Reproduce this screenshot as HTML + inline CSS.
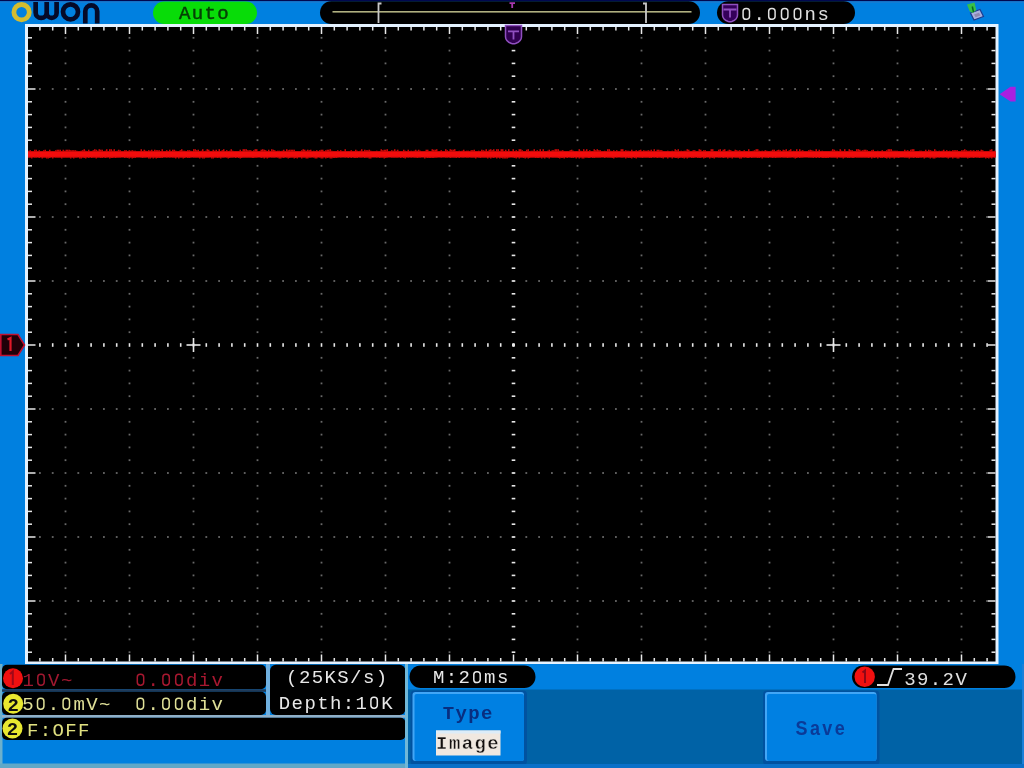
<!DOCTYPE html>
<html><head><meta charset="utf-8"><style>
html,body{margin:0;padding:0;width:1024px;height:768px;overflow:hidden;background:#0080e0}
svg{position:absolute;left:0;top:0;display:block;filter:blur(0.5px)}
text{font-family:"Liberation Mono",monospace;font-size:19px}
</style></head><body>
<svg width="1024" height="768" viewBox="0 0 1024 768">
<rect x="0" y="0" width="1024" height="768" fill="#0080e0"/>
<rect x="0" y="0" width="1024" height="1.3" fill="#000850"/>
<rect x="0" y="1.3" width="1024" height="1.5" fill="#1a7cd0"/>
<rect x="25" y="24" width="973.5" height="640" fill="#e4f2ff"/>
<rect x="28.0" y="27.0" width="967.5" height="634.5" fill="#000"/>
<g fill="#686868"><rect x="64.6" y="36.9" width="1.8" height="1.8"/><rect x="64.6" y="49.7" width="1.8" height="1.8"/><rect x="64.6" y="62.5" width="1.8" height="1.8"/><rect x="64.6" y="75.3" width="1.8" height="1.8"/><rect x="64.6" y="100.9" width="1.8" height="1.8"/><rect x="64.6" y="113.7" width="1.8" height="1.8"/><rect x="64.6" y="126.5" width="1.8" height="1.8"/><rect x="64.6" y="139.3" width="1.8" height="1.8"/><rect x="64.6" y="164.9" width="1.8" height="1.8"/><rect x="64.6" y="177.7" width="1.8" height="1.8"/><rect x="64.6" y="190.5" width="1.8" height="1.8"/><rect x="64.6" y="203.3" width="1.8" height="1.8"/><rect x="64.6" y="228.9" width="1.8" height="1.8"/><rect x="64.6" y="241.7" width="1.8" height="1.8"/><rect x="64.6" y="254.5" width="1.8" height="1.8"/><rect x="64.6" y="267.3" width="1.8" height="1.8"/><rect x="64.6" y="292.9" width="1.8" height="1.8"/><rect x="64.6" y="305.7" width="1.8" height="1.8"/><rect x="64.6" y="318.5" width="1.8" height="1.8"/><rect x="64.6" y="331.3" width="1.8" height="1.8"/><rect x="64.6" y="356.9" width="1.8" height="1.8"/><rect x="64.6" y="369.7" width="1.8" height="1.8"/><rect x="64.6" y="382.5" width="1.8" height="1.8"/><rect x="64.6" y="395.3" width="1.8" height="1.8"/><rect x="64.6" y="420.9" width="1.8" height="1.8"/><rect x="64.6" y="433.7" width="1.8" height="1.8"/><rect x="64.6" y="446.5" width="1.8" height="1.8"/><rect x="64.6" y="459.3" width="1.8" height="1.8"/><rect x="64.6" y="484.9" width="1.8" height="1.8"/><rect x="64.6" y="497.7" width="1.8" height="1.8"/><rect x="64.6" y="510.5" width="1.8" height="1.8"/><rect x="64.6" y="523.3" width="1.8" height="1.8"/><rect x="64.6" y="548.9" width="1.8" height="1.8"/><rect x="64.6" y="561.7" width="1.8" height="1.8"/><rect x="64.6" y="574.5" width="1.8" height="1.8"/><rect x="64.6" y="587.3" width="1.8" height="1.8"/><rect x="64.6" y="612.9" width="1.8" height="1.8"/><rect x="64.6" y="625.7" width="1.8" height="1.8"/><rect x="64.6" y="638.5" width="1.8" height="1.8"/><rect x="64.6" y="651.3" width="1.8" height="1.8"/><rect x="128.6" y="36.9" width="1.8" height="1.8"/><rect x="128.6" y="49.7" width="1.8" height="1.8"/><rect x="128.6" y="62.5" width="1.8" height="1.8"/><rect x="128.6" y="75.3" width="1.8" height="1.8"/><rect x="128.6" y="100.9" width="1.8" height="1.8"/><rect x="128.6" y="113.7" width="1.8" height="1.8"/><rect x="128.6" y="126.5" width="1.8" height="1.8"/><rect x="128.6" y="139.3" width="1.8" height="1.8"/><rect x="128.6" y="164.9" width="1.8" height="1.8"/><rect x="128.6" y="177.7" width="1.8" height="1.8"/><rect x="128.6" y="190.5" width="1.8" height="1.8"/><rect x="128.6" y="203.3" width="1.8" height="1.8"/><rect x="128.6" y="228.9" width="1.8" height="1.8"/><rect x="128.6" y="241.7" width="1.8" height="1.8"/><rect x="128.6" y="254.5" width="1.8" height="1.8"/><rect x="128.6" y="267.3" width="1.8" height="1.8"/><rect x="128.6" y="292.9" width="1.8" height="1.8"/><rect x="128.6" y="305.7" width="1.8" height="1.8"/><rect x="128.6" y="318.5" width="1.8" height="1.8"/><rect x="128.6" y="331.3" width="1.8" height="1.8"/><rect x="128.6" y="356.9" width="1.8" height="1.8"/><rect x="128.6" y="369.7" width="1.8" height="1.8"/><rect x="128.6" y="382.5" width="1.8" height="1.8"/><rect x="128.6" y="395.3" width="1.8" height="1.8"/><rect x="128.6" y="420.9" width="1.8" height="1.8"/><rect x="128.6" y="433.7" width="1.8" height="1.8"/><rect x="128.6" y="446.5" width="1.8" height="1.8"/><rect x="128.6" y="459.3" width="1.8" height="1.8"/><rect x="128.6" y="484.9" width="1.8" height="1.8"/><rect x="128.6" y="497.7" width="1.8" height="1.8"/><rect x="128.6" y="510.5" width="1.8" height="1.8"/><rect x="128.6" y="523.3" width="1.8" height="1.8"/><rect x="128.6" y="548.9" width="1.8" height="1.8"/><rect x="128.6" y="561.7" width="1.8" height="1.8"/><rect x="128.6" y="574.5" width="1.8" height="1.8"/><rect x="128.6" y="587.3" width="1.8" height="1.8"/><rect x="128.6" y="612.9" width="1.8" height="1.8"/><rect x="128.6" y="625.7" width="1.8" height="1.8"/><rect x="128.6" y="638.5" width="1.8" height="1.8"/><rect x="128.6" y="651.3" width="1.8" height="1.8"/><rect x="192.6" y="36.9" width="1.8" height="1.8"/><rect x="192.6" y="49.7" width="1.8" height="1.8"/><rect x="192.6" y="62.5" width="1.8" height="1.8"/><rect x="192.6" y="75.3" width="1.8" height="1.8"/><rect x="192.6" y="100.9" width="1.8" height="1.8"/><rect x="192.6" y="113.7" width="1.8" height="1.8"/><rect x="192.6" y="126.5" width="1.8" height="1.8"/><rect x="192.6" y="139.3" width="1.8" height="1.8"/><rect x="192.6" y="164.9" width="1.8" height="1.8"/><rect x="192.6" y="177.7" width="1.8" height="1.8"/><rect x="192.6" y="190.5" width="1.8" height="1.8"/><rect x="192.6" y="203.3" width="1.8" height="1.8"/><rect x="192.6" y="228.9" width="1.8" height="1.8"/><rect x="192.6" y="241.7" width="1.8" height="1.8"/><rect x="192.6" y="254.5" width="1.8" height="1.8"/><rect x="192.6" y="267.3" width="1.8" height="1.8"/><rect x="192.6" y="292.9" width="1.8" height="1.8"/><rect x="192.6" y="305.7" width="1.8" height="1.8"/><rect x="192.6" y="318.5" width="1.8" height="1.8"/><rect x="192.6" y="331.3" width="1.8" height="1.8"/><rect x="192.6" y="356.9" width="1.8" height="1.8"/><rect x="192.6" y="369.7" width="1.8" height="1.8"/><rect x="192.6" y="382.5" width="1.8" height="1.8"/><rect x="192.6" y="395.3" width="1.8" height="1.8"/><rect x="192.6" y="420.9" width="1.8" height="1.8"/><rect x="192.6" y="433.7" width="1.8" height="1.8"/><rect x="192.6" y="446.5" width="1.8" height="1.8"/><rect x="192.6" y="459.3" width="1.8" height="1.8"/><rect x="192.6" y="484.9" width="1.8" height="1.8"/><rect x="192.6" y="497.7" width="1.8" height="1.8"/><rect x="192.6" y="510.5" width="1.8" height="1.8"/><rect x="192.6" y="523.3" width="1.8" height="1.8"/><rect x="192.6" y="548.9" width="1.8" height="1.8"/><rect x="192.6" y="561.7" width="1.8" height="1.8"/><rect x="192.6" y="574.5" width="1.8" height="1.8"/><rect x="192.6" y="587.3" width="1.8" height="1.8"/><rect x="192.6" y="612.9" width="1.8" height="1.8"/><rect x="192.6" y="625.7" width="1.8" height="1.8"/><rect x="192.6" y="638.5" width="1.8" height="1.8"/><rect x="192.6" y="651.3" width="1.8" height="1.8"/><rect x="256.6" y="36.9" width="1.8" height="1.8"/><rect x="256.6" y="49.7" width="1.8" height="1.8"/><rect x="256.6" y="62.5" width="1.8" height="1.8"/><rect x="256.6" y="75.3" width="1.8" height="1.8"/><rect x="256.6" y="100.9" width="1.8" height="1.8"/><rect x="256.6" y="113.7" width="1.8" height="1.8"/><rect x="256.6" y="126.5" width="1.8" height="1.8"/><rect x="256.6" y="139.3" width="1.8" height="1.8"/><rect x="256.6" y="164.9" width="1.8" height="1.8"/><rect x="256.6" y="177.7" width="1.8" height="1.8"/><rect x="256.6" y="190.5" width="1.8" height="1.8"/><rect x="256.6" y="203.3" width="1.8" height="1.8"/><rect x="256.6" y="228.9" width="1.8" height="1.8"/><rect x="256.6" y="241.7" width="1.8" height="1.8"/><rect x="256.6" y="254.5" width="1.8" height="1.8"/><rect x="256.6" y="267.3" width="1.8" height="1.8"/><rect x="256.6" y="292.9" width="1.8" height="1.8"/><rect x="256.6" y="305.7" width="1.8" height="1.8"/><rect x="256.6" y="318.5" width="1.8" height="1.8"/><rect x="256.6" y="331.3" width="1.8" height="1.8"/><rect x="256.6" y="356.9" width="1.8" height="1.8"/><rect x="256.6" y="369.7" width="1.8" height="1.8"/><rect x="256.6" y="382.5" width="1.8" height="1.8"/><rect x="256.6" y="395.3" width="1.8" height="1.8"/><rect x="256.6" y="420.9" width="1.8" height="1.8"/><rect x="256.6" y="433.7" width="1.8" height="1.8"/><rect x="256.6" y="446.5" width="1.8" height="1.8"/><rect x="256.6" y="459.3" width="1.8" height="1.8"/><rect x="256.6" y="484.9" width="1.8" height="1.8"/><rect x="256.6" y="497.7" width="1.8" height="1.8"/><rect x="256.6" y="510.5" width="1.8" height="1.8"/><rect x="256.6" y="523.3" width="1.8" height="1.8"/><rect x="256.6" y="548.9" width="1.8" height="1.8"/><rect x="256.6" y="561.7" width="1.8" height="1.8"/><rect x="256.6" y="574.5" width="1.8" height="1.8"/><rect x="256.6" y="587.3" width="1.8" height="1.8"/><rect x="256.6" y="612.9" width="1.8" height="1.8"/><rect x="256.6" y="625.7" width="1.8" height="1.8"/><rect x="256.6" y="638.5" width="1.8" height="1.8"/><rect x="256.6" y="651.3" width="1.8" height="1.8"/><rect x="320.6" y="36.9" width="1.8" height="1.8"/><rect x="320.6" y="49.7" width="1.8" height="1.8"/><rect x="320.6" y="62.5" width="1.8" height="1.8"/><rect x="320.6" y="75.3" width="1.8" height="1.8"/><rect x="320.6" y="100.9" width="1.8" height="1.8"/><rect x="320.6" y="113.7" width="1.8" height="1.8"/><rect x="320.6" y="126.5" width="1.8" height="1.8"/><rect x="320.6" y="139.3" width="1.8" height="1.8"/><rect x="320.6" y="164.9" width="1.8" height="1.8"/><rect x="320.6" y="177.7" width="1.8" height="1.8"/><rect x="320.6" y="190.5" width="1.8" height="1.8"/><rect x="320.6" y="203.3" width="1.8" height="1.8"/><rect x="320.6" y="228.9" width="1.8" height="1.8"/><rect x="320.6" y="241.7" width="1.8" height="1.8"/><rect x="320.6" y="254.5" width="1.8" height="1.8"/><rect x="320.6" y="267.3" width="1.8" height="1.8"/><rect x="320.6" y="292.9" width="1.8" height="1.8"/><rect x="320.6" y="305.7" width="1.8" height="1.8"/><rect x="320.6" y="318.5" width="1.8" height="1.8"/><rect x="320.6" y="331.3" width="1.8" height="1.8"/><rect x="320.6" y="356.9" width="1.8" height="1.8"/><rect x="320.6" y="369.7" width="1.8" height="1.8"/><rect x="320.6" y="382.5" width="1.8" height="1.8"/><rect x="320.6" y="395.3" width="1.8" height="1.8"/><rect x="320.6" y="420.9" width="1.8" height="1.8"/><rect x="320.6" y="433.7" width="1.8" height="1.8"/><rect x="320.6" y="446.5" width="1.8" height="1.8"/><rect x="320.6" y="459.3" width="1.8" height="1.8"/><rect x="320.6" y="484.9" width="1.8" height="1.8"/><rect x="320.6" y="497.7" width="1.8" height="1.8"/><rect x="320.6" y="510.5" width="1.8" height="1.8"/><rect x="320.6" y="523.3" width="1.8" height="1.8"/><rect x="320.6" y="548.9" width="1.8" height="1.8"/><rect x="320.6" y="561.7" width="1.8" height="1.8"/><rect x="320.6" y="574.5" width="1.8" height="1.8"/><rect x="320.6" y="587.3" width="1.8" height="1.8"/><rect x="320.6" y="612.9" width="1.8" height="1.8"/><rect x="320.6" y="625.7" width="1.8" height="1.8"/><rect x="320.6" y="638.5" width="1.8" height="1.8"/><rect x="320.6" y="651.3" width="1.8" height="1.8"/><rect x="384.6" y="36.9" width="1.8" height="1.8"/><rect x="384.6" y="49.7" width="1.8" height="1.8"/><rect x="384.6" y="62.5" width="1.8" height="1.8"/><rect x="384.6" y="75.3" width="1.8" height="1.8"/><rect x="384.6" y="100.9" width="1.8" height="1.8"/><rect x="384.6" y="113.7" width="1.8" height="1.8"/><rect x="384.6" y="126.5" width="1.8" height="1.8"/><rect x="384.6" y="139.3" width="1.8" height="1.8"/><rect x="384.6" y="164.9" width="1.8" height="1.8"/><rect x="384.6" y="177.7" width="1.8" height="1.8"/><rect x="384.6" y="190.5" width="1.8" height="1.8"/><rect x="384.6" y="203.3" width="1.8" height="1.8"/><rect x="384.6" y="228.9" width="1.8" height="1.8"/><rect x="384.6" y="241.7" width="1.8" height="1.8"/><rect x="384.6" y="254.5" width="1.8" height="1.8"/><rect x="384.6" y="267.3" width="1.8" height="1.8"/><rect x="384.6" y="292.9" width="1.8" height="1.8"/><rect x="384.6" y="305.7" width="1.8" height="1.8"/><rect x="384.6" y="318.5" width="1.8" height="1.8"/><rect x="384.6" y="331.3" width="1.8" height="1.8"/><rect x="384.6" y="356.9" width="1.8" height="1.8"/><rect x="384.6" y="369.7" width="1.8" height="1.8"/><rect x="384.6" y="382.5" width="1.8" height="1.8"/><rect x="384.6" y="395.3" width="1.8" height="1.8"/><rect x="384.6" y="420.9" width="1.8" height="1.8"/><rect x="384.6" y="433.7" width="1.8" height="1.8"/><rect x="384.6" y="446.5" width="1.8" height="1.8"/><rect x="384.6" y="459.3" width="1.8" height="1.8"/><rect x="384.6" y="484.9" width="1.8" height="1.8"/><rect x="384.6" y="497.7" width="1.8" height="1.8"/><rect x="384.6" y="510.5" width="1.8" height="1.8"/><rect x="384.6" y="523.3" width="1.8" height="1.8"/><rect x="384.6" y="548.9" width="1.8" height="1.8"/><rect x="384.6" y="561.7" width="1.8" height="1.8"/><rect x="384.6" y="574.5" width="1.8" height="1.8"/><rect x="384.6" y="587.3" width="1.8" height="1.8"/><rect x="384.6" y="612.9" width="1.8" height="1.8"/><rect x="384.6" y="625.7" width="1.8" height="1.8"/><rect x="384.6" y="638.5" width="1.8" height="1.8"/><rect x="384.6" y="651.3" width="1.8" height="1.8"/><rect x="448.6" y="36.9" width="1.8" height="1.8"/><rect x="448.6" y="49.7" width="1.8" height="1.8"/><rect x="448.6" y="62.5" width="1.8" height="1.8"/><rect x="448.6" y="75.3" width="1.8" height="1.8"/><rect x="448.6" y="100.9" width="1.8" height="1.8"/><rect x="448.6" y="113.7" width="1.8" height="1.8"/><rect x="448.6" y="126.5" width="1.8" height="1.8"/><rect x="448.6" y="139.3" width="1.8" height="1.8"/><rect x="448.6" y="164.9" width="1.8" height="1.8"/><rect x="448.6" y="177.7" width="1.8" height="1.8"/><rect x="448.6" y="190.5" width="1.8" height="1.8"/><rect x="448.6" y="203.3" width="1.8" height="1.8"/><rect x="448.6" y="228.9" width="1.8" height="1.8"/><rect x="448.6" y="241.7" width="1.8" height="1.8"/><rect x="448.6" y="254.5" width="1.8" height="1.8"/><rect x="448.6" y="267.3" width="1.8" height="1.8"/><rect x="448.6" y="292.9" width="1.8" height="1.8"/><rect x="448.6" y="305.7" width="1.8" height="1.8"/><rect x="448.6" y="318.5" width="1.8" height="1.8"/><rect x="448.6" y="331.3" width="1.8" height="1.8"/><rect x="448.6" y="356.9" width="1.8" height="1.8"/><rect x="448.6" y="369.7" width="1.8" height="1.8"/><rect x="448.6" y="382.5" width="1.8" height="1.8"/><rect x="448.6" y="395.3" width="1.8" height="1.8"/><rect x="448.6" y="420.9" width="1.8" height="1.8"/><rect x="448.6" y="433.7" width="1.8" height="1.8"/><rect x="448.6" y="446.5" width="1.8" height="1.8"/><rect x="448.6" y="459.3" width="1.8" height="1.8"/><rect x="448.6" y="484.9" width="1.8" height="1.8"/><rect x="448.6" y="497.7" width="1.8" height="1.8"/><rect x="448.6" y="510.5" width="1.8" height="1.8"/><rect x="448.6" y="523.3" width="1.8" height="1.8"/><rect x="448.6" y="548.9" width="1.8" height="1.8"/><rect x="448.6" y="561.7" width="1.8" height="1.8"/><rect x="448.6" y="574.5" width="1.8" height="1.8"/><rect x="448.6" y="587.3" width="1.8" height="1.8"/><rect x="448.6" y="612.9" width="1.8" height="1.8"/><rect x="448.6" y="625.7" width="1.8" height="1.8"/><rect x="448.6" y="638.5" width="1.8" height="1.8"/><rect x="448.6" y="651.3" width="1.8" height="1.8"/><rect x="576.6" y="36.9" width="1.8" height="1.8"/><rect x="576.6" y="49.7" width="1.8" height="1.8"/><rect x="576.6" y="62.5" width="1.8" height="1.8"/><rect x="576.6" y="75.3" width="1.8" height="1.8"/><rect x="576.6" y="100.9" width="1.8" height="1.8"/><rect x="576.6" y="113.7" width="1.8" height="1.8"/><rect x="576.6" y="126.5" width="1.8" height="1.8"/><rect x="576.6" y="139.3" width="1.8" height="1.8"/><rect x="576.6" y="164.9" width="1.8" height="1.8"/><rect x="576.6" y="177.7" width="1.8" height="1.8"/><rect x="576.6" y="190.5" width="1.8" height="1.8"/><rect x="576.6" y="203.3" width="1.8" height="1.8"/><rect x="576.6" y="228.9" width="1.8" height="1.8"/><rect x="576.6" y="241.7" width="1.8" height="1.8"/><rect x="576.6" y="254.5" width="1.8" height="1.8"/><rect x="576.6" y="267.3" width="1.8" height="1.8"/><rect x="576.6" y="292.9" width="1.8" height="1.8"/><rect x="576.6" y="305.7" width="1.8" height="1.8"/><rect x="576.6" y="318.5" width="1.8" height="1.8"/><rect x="576.6" y="331.3" width="1.8" height="1.8"/><rect x="576.6" y="356.9" width="1.8" height="1.8"/><rect x="576.6" y="369.7" width="1.8" height="1.8"/><rect x="576.6" y="382.5" width="1.8" height="1.8"/><rect x="576.6" y="395.3" width="1.8" height="1.8"/><rect x="576.6" y="420.9" width="1.8" height="1.8"/><rect x="576.6" y="433.7" width="1.8" height="1.8"/><rect x="576.6" y="446.5" width="1.8" height="1.8"/><rect x="576.6" y="459.3" width="1.8" height="1.8"/><rect x="576.6" y="484.9" width="1.8" height="1.8"/><rect x="576.6" y="497.7" width="1.8" height="1.8"/><rect x="576.6" y="510.5" width="1.8" height="1.8"/><rect x="576.6" y="523.3" width="1.8" height="1.8"/><rect x="576.6" y="548.9" width="1.8" height="1.8"/><rect x="576.6" y="561.7" width="1.8" height="1.8"/><rect x="576.6" y="574.5" width="1.8" height="1.8"/><rect x="576.6" y="587.3" width="1.8" height="1.8"/><rect x="576.6" y="612.9" width="1.8" height="1.8"/><rect x="576.6" y="625.7" width="1.8" height="1.8"/><rect x="576.6" y="638.5" width="1.8" height="1.8"/><rect x="576.6" y="651.3" width="1.8" height="1.8"/><rect x="640.6" y="36.9" width="1.8" height="1.8"/><rect x="640.6" y="49.7" width="1.8" height="1.8"/><rect x="640.6" y="62.5" width="1.8" height="1.8"/><rect x="640.6" y="75.3" width="1.8" height="1.8"/><rect x="640.6" y="100.9" width="1.8" height="1.8"/><rect x="640.6" y="113.7" width="1.8" height="1.8"/><rect x="640.6" y="126.5" width="1.8" height="1.8"/><rect x="640.6" y="139.3" width="1.8" height="1.8"/><rect x="640.6" y="164.9" width="1.8" height="1.8"/><rect x="640.6" y="177.7" width="1.8" height="1.8"/><rect x="640.6" y="190.5" width="1.8" height="1.8"/><rect x="640.6" y="203.3" width="1.8" height="1.8"/><rect x="640.6" y="228.9" width="1.8" height="1.8"/><rect x="640.6" y="241.7" width="1.8" height="1.8"/><rect x="640.6" y="254.5" width="1.8" height="1.8"/><rect x="640.6" y="267.3" width="1.8" height="1.8"/><rect x="640.6" y="292.9" width="1.8" height="1.8"/><rect x="640.6" y="305.7" width="1.8" height="1.8"/><rect x="640.6" y="318.5" width="1.8" height="1.8"/><rect x="640.6" y="331.3" width="1.8" height="1.8"/><rect x="640.6" y="356.9" width="1.8" height="1.8"/><rect x="640.6" y="369.7" width="1.8" height="1.8"/><rect x="640.6" y="382.5" width="1.8" height="1.8"/><rect x="640.6" y="395.3" width="1.8" height="1.8"/><rect x="640.6" y="420.9" width="1.8" height="1.8"/><rect x="640.6" y="433.7" width="1.8" height="1.8"/><rect x="640.6" y="446.5" width="1.8" height="1.8"/><rect x="640.6" y="459.3" width="1.8" height="1.8"/><rect x="640.6" y="484.9" width="1.8" height="1.8"/><rect x="640.6" y="497.7" width="1.8" height="1.8"/><rect x="640.6" y="510.5" width="1.8" height="1.8"/><rect x="640.6" y="523.3" width="1.8" height="1.8"/><rect x="640.6" y="548.9" width="1.8" height="1.8"/><rect x="640.6" y="561.7" width="1.8" height="1.8"/><rect x="640.6" y="574.5" width="1.8" height="1.8"/><rect x="640.6" y="587.3" width="1.8" height="1.8"/><rect x="640.6" y="612.9" width="1.8" height="1.8"/><rect x="640.6" y="625.7" width="1.8" height="1.8"/><rect x="640.6" y="638.5" width="1.8" height="1.8"/><rect x="640.6" y="651.3" width="1.8" height="1.8"/><rect x="704.6" y="36.9" width="1.8" height="1.8"/><rect x="704.6" y="49.7" width="1.8" height="1.8"/><rect x="704.6" y="62.5" width="1.8" height="1.8"/><rect x="704.6" y="75.3" width="1.8" height="1.8"/><rect x="704.6" y="100.9" width="1.8" height="1.8"/><rect x="704.6" y="113.7" width="1.8" height="1.8"/><rect x="704.6" y="126.5" width="1.8" height="1.8"/><rect x="704.6" y="139.3" width="1.8" height="1.8"/><rect x="704.6" y="164.9" width="1.8" height="1.8"/><rect x="704.6" y="177.7" width="1.8" height="1.8"/><rect x="704.6" y="190.5" width="1.8" height="1.8"/><rect x="704.6" y="203.3" width="1.8" height="1.8"/><rect x="704.6" y="228.9" width="1.8" height="1.8"/><rect x="704.6" y="241.7" width="1.8" height="1.8"/><rect x="704.6" y="254.5" width="1.8" height="1.8"/><rect x="704.6" y="267.3" width="1.8" height="1.8"/><rect x="704.6" y="292.9" width="1.8" height="1.8"/><rect x="704.6" y="305.7" width="1.8" height="1.8"/><rect x="704.6" y="318.5" width="1.8" height="1.8"/><rect x="704.6" y="331.3" width="1.8" height="1.8"/><rect x="704.6" y="356.9" width="1.8" height="1.8"/><rect x="704.6" y="369.7" width="1.8" height="1.8"/><rect x="704.6" y="382.5" width="1.8" height="1.8"/><rect x="704.6" y="395.3" width="1.8" height="1.8"/><rect x="704.6" y="420.9" width="1.8" height="1.8"/><rect x="704.6" y="433.7" width="1.8" height="1.8"/><rect x="704.6" y="446.5" width="1.8" height="1.8"/><rect x="704.6" y="459.3" width="1.8" height="1.8"/><rect x="704.6" y="484.9" width="1.8" height="1.8"/><rect x="704.6" y="497.7" width="1.8" height="1.8"/><rect x="704.6" y="510.5" width="1.8" height="1.8"/><rect x="704.6" y="523.3" width="1.8" height="1.8"/><rect x="704.6" y="548.9" width="1.8" height="1.8"/><rect x="704.6" y="561.7" width="1.8" height="1.8"/><rect x="704.6" y="574.5" width="1.8" height="1.8"/><rect x="704.6" y="587.3" width="1.8" height="1.8"/><rect x="704.6" y="612.9" width="1.8" height="1.8"/><rect x="704.6" y="625.7" width="1.8" height="1.8"/><rect x="704.6" y="638.5" width="1.8" height="1.8"/><rect x="704.6" y="651.3" width="1.8" height="1.8"/><rect x="768.6" y="36.9" width="1.8" height="1.8"/><rect x="768.6" y="49.7" width="1.8" height="1.8"/><rect x="768.6" y="62.5" width="1.8" height="1.8"/><rect x="768.6" y="75.3" width="1.8" height="1.8"/><rect x="768.6" y="100.9" width="1.8" height="1.8"/><rect x="768.6" y="113.7" width="1.8" height="1.8"/><rect x="768.6" y="126.5" width="1.8" height="1.8"/><rect x="768.6" y="139.3" width="1.8" height="1.8"/><rect x="768.6" y="164.9" width="1.8" height="1.8"/><rect x="768.6" y="177.7" width="1.8" height="1.8"/><rect x="768.6" y="190.5" width="1.8" height="1.8"/><rect x="768.6" y="203.3" width="1.8" height="1.8"/><rect x="768.6" y="228.9" width="1.8" height="1.8"/><rect x="768.6" y="241.7" width="1.8" height="1.8"/><rect x="768.6" y="254.5" width="1.8" height="1.8"/><rect x="768.6" y="267.3" width="1.8" height="1.8"/><rect x="768.6" y="292.9" width="1.8" height="1.8"/><rect x="768.6" y="305.7" width="1.8" height="1.8"/><rect x="768.6" y="318.5" width="1.8" height="1.8"/><rect x="768.6" y="331.3" width="1.8" height="1.8"/><rect x="768.6" y="356.9" width="1.8" height="1.8"/><rect x="768.6" y="369.7" width="1.8" height="1.8"/><rect x="768.6" y="382.5" width="1.8" height="1.8"/><rect x="768.6" y="395.3" width="1.8" height="1.8"/><rect x="768.6" y="420.9" width="1.8" height="1.8"/><rect x="768.6" y="433.7" width="1.8" height="1.8"/><rect x="768.6" y="446.5" width="1.8" height="1.8"/><rect x="768.6" y="459.3" width="1.8" height="1.8"/><rect x="768.6" y="484.9" width="1.8" height="1.8"/><rect x="768.6" y="497.7" width="1.8" height="1.8"/><rect x="768.6" y="510.5" width="1.8" height="1.8"/><rect x="768.6" y="523.3" width="1.8" height="1.8"/><rect x="768.6" y="548.9" width="1.8" height="1.8"/><rect x="768.6" y="561.7" width="1.8" height="1.8"/><rect x="768.6" y="574.5" width="1.8" height="1.8"/><rect x="768.6" y="587.3" width="1.8" height="1.8"/><rect x="768.6" y="612.9" width="1.8" height="1.8"/><rect x="768.6" y="625.7" width="1.8" height="1.8"/><rect x="768.6" y="638.5" width="1.8" height="1.8"/><rect x="768.6" y="651.3" width="1.8" height="1.8"/><rect x="832.6" y="36.9" width="1.8" height="1.8"/><rect x="832.6" y="49.7" width="1.8" height="1.8"/><rect x="832.6" y="62.5" width="1.8" height="1.8"/><rect x="832.6" y="75.3" width="1.8" height="1.8"/><rect x="832.6" y="100.9" width="1.8" height="1.8"/><rect x="832.6" y="113.7" width="1.8" height="1.8"/><rect x="832.6" y="126.5" width="1.8" height="1.8"/><rect x="832.6" y="139.3" width="1.8" height="1.8"/><rect x="832.6" y="164.9" width="1.8" height="1.8"/><rect x="832.6" y="177.7" width="1.8" height="1.8"/><rect x="832.6" y="190.5" width="1.8" height="1.8"/><rect x="832.6" y="203.3" width="1.8" height="1.8"/><rect x="832.6" y="228.9" width="1.8" height="1.8"/><rect x="832.6" y="241.7" width="1.8" height="1.8"/><rect x="832.6" y="254.5" width="1.8" height="1.8"/><rect x="832.6" y="267.3" width="1.8" height="1.8"/><rect x="832.6" y="292.9" width="1.8" height="1.8"/><rect x="832.6" y="305.7" width="1.8" height="1.8"/><rect x="832.6" y="318.5" width="1.8" height="1.8"/><rect x="832.6" y="331.3" width="1.8" height="1.8"/><rect x="832.6" y="356.9" width="1.8" height="1.8"/><rect x="832.6" y="369.7" width="1.8" height="1.8"/><rect x="832.6" y="382.5" width="1.8" height="1.8"/><rect x="832.6" y="395.3" width="1.8" height="1.8"/><rect x="832.6" y="420.9" width="1.8" height="1.8"/><rect x="832.6" y="433.7" width="1.8" height="1.8"/><rect x="832.6" y="446.5" width="1.8" height="1.8"/><rect x="832.6" y="459.3" width="1.8" height="1.8"/><rect x="832.6" y="484.9" width="1.8" height="1.8"/><rect x="832.6" y="497.7" width="1.8" height="1.8"/><rect x="832.6" y="510.5" width="1.8" height="1.8"/><rect x="832.6" y="523.3" width="1.8" height="1.8"/><rect x="832.6" y="548.9" width="1.8" height="1.8"/><rect x="832.6" y="561.7" width="1.8" height="1.8"/><rect x="832.6" y="574.5" width="1.8" height="1.8"/><rect x="832.6" y="587.3" width="1.8" height="1.8"/><rect x="832.6" y="612.9" width="1.8" height="1.8"/><rect x="832.6" y="625.7" width="1.8" height="1.8"/><rect x="832.6" y="638.5" width="1.8" height="1.8"/><rect x="832.6" y="651.3" width="1.8" height="1.8"/><rect x="896.6" y="36.9" width="1.8" height="1.8"/><rect x="896.6" y="49.7" width="1.8" height="1.8"/><rect x="896.6" y="62.5" width="1.8" height="1.8"/><rect x="896.6" y="75.3" width="1.8" height="1.8"/><rect x="896.6" y="100.9" width="1.8" height="1.8"/><rect x="896.6" y="113.7" width="1.8" height="1.8"/><rect x="896.6" y="126.5" width="1.8" height="1.8"/><rect x="896.6" y="139.3" width="1.8" height="1.8"/><rect x="896.6" y="164.9" width="1.8" height="1.8"/><rect x="896.6" y="177.7" width="1.8" height="1.8"/><rect x="896.6" y="190.5" width="1.8" height="1.8"/><rect x="896.6" y="203.3" width="1.8" height="1.8"/><rect x="896.6" y="228.9" width="1.8" height="1.8"/><rect x="896.6" y="241.7" width="1.8" height="1.8"/><rect x="896.6" y="254.5" width="1.8" height="1.8"/><rect x="896.6" y="267.3" width="1.8" height="1.8"/><rect x="896.6" y="292.9" width="1.8" height="1.8"/><rect x="896.6" y="305.7" width="1.8" height="1.8"/><rect x="896.6" y="318.5" width="1.8" height="1.8"/><rect x="896.6" y="331.3" width="1.8" height="1.8"/><rect x="896.6" y="356.9" width="1.8" height="1.8"/><rect x="896.6" y="369.7" width="1.8" height="1.8"/><rect x="896.6" y="382.5" width="1.8" height="1.8"/><rect x="896.6" y="395.3" width="1.8" height="1.8"/><rect x="896.6" y="420.9" width="1.8" height="1.8"/><rect x="896.6" y="433.7" width="1.8" height="1.8"/><rect x="896.6" y="446.5" width="1.8" height="1.8"/><rect x="896.6" y="459.3" width="1.8" height="1.8"/><rect x="896.6" y="484.9" width="1.8" height="1.8"/><rect x="896.6" y="497.7" width="1.8" height="1.8"/><rect x="896.6" y="510.5" width="1.8" height="1.8"/><rect x="896.6" y="523.3" width="1.8" height="1.8"/><rect x="896.6" y="548.9" width="1.8" height="1.8"/><rect x="896.6" y="561.7" width="1.8" height="1.8"/><rect x="896.6" y="574.5" width="1.8" height="1.8"/><rect x="896.6" y="587.3" width="1.8" height="1.8"/><rect x="896.6" y="612.9" width="1.8" height="1.8"/><rect x="896.6" y="625.7" width="1.8" height="1.8"/><rect x="896.6" y="638.5" width="1.8" height="1.8"/><rect x="896.6" y="651.3" width="1.8" height="1.8"/><rect x="960.6" y="36.9" width="1.8" height="1.8"/><rect x="960.6" y="49.7" width="1.8" height="1.8"/><rect x="960.6" y="62.5" width="1.8" height="1.8"/><rect x="960.6" y="75.3" width="1.8" height="1.8"/><rect x="960.6" y="100.9" width="1.8" height="1.8"/><rect x="960.6" y="113.7" width="1.8" height="1.8"/><rect x="960.6" y="126.5" width="1.8" height="1.8"/><rect x="960.6" y="139.3" width="1.8" height="1.8"/><rect x="960.6" y="164.9" width="1.8" height="1.8"/><rect x="960.6" y="177.7" width="1.8" height="1.8"/><rect x="960.6" y="190.5" width="1.8" height="1.8"/><rect x="960.6" y="203.3" width="1.8" height="1.8"/><rect x="960.6" y="228.9" width="1.8" height="1.8"/><rect x="960.6" y="241.7" width="1.8" height="1.8"/><rect x="960.6" y="254.5" width="1.8" height="1.8"/><rect x="960.6" y="267.3" width="1.8" height="1.8"/><rect x="960.6" y="292.9" width="1.8" height="1.8"/><rect x="960.6" y="305.7" width="1.8" height="1.8"/><rect x="960.6" y="318.5" width="1.8" height="1.8"/><rect x="960.6" y="331.3" width="1.8" height="1.8"/><rect x="960.6" y="356.9" width="1.8" height="1.8"/><rect x="960.6" y="369.7" width="1.8" height="1.8"/><rect x="960.6" y="382.5" width="1.8" height="1.8"/><rect x="960.6" y="395.3" width="1.8" height="1.8"/><rect x="960.6" y="420.9" width="1.8" height="1.8"/><rect x="960.6" y="433.7" width="1.8" height="1.8"/><rect x="960.6" y="446.5" width="1.8" height="1.8"/><rect x="960.6" y="459.3" width="1.8" height="1.8"/><rect x="960.6" y="484.9" width="1.8" height="1.8"/><rect x="960.6" y="497.7" width="1.8" height="1.8"/><rect x="960.6" y="510.5" width="1.8" height="1.8"/><rect x="960.6" y="523.3" width="1.8" height="1.8"/><rect x="960.6" y="548.9" width="1.8" height="1.8"/><rect x="960.6" y="561.7" width="1.8" height="1.8"/><rect x="960.6" y="574.5" width="1.8" height="1.8"/><rect x="960.6" y="587.3" width="1.8" height="1.8"/><rect x="960.6" y="612.9" width="1.8" height="1.8"/><rect x="960.6" y="625.7" width="1.8" height="1.8"/><rect x="960.6" y="638.5" width="1.8" height="1.8"/><rect x="960.6" y="651.3" width="1.8" height="1.8"/><rect x="39.0" y="88.1" width="1.8" height="1.8"/><rect x="51.8" y="88.1" width="1.8" height="1.8"/><rect x="64.6" y="88.1" width="1.8" height="1.8"/><rect x="77.4" y="88.1" width="1.8" height="1.8"/><rect x="90.2" y="88.1" width="1.8" height="1.8"/><rect x="103.0" y="88.1" width="1.8" height="1.8"/><rect x="115.8" y="88.1" width="1.8" height="1.8"/><rect x="128.6" y="88.1" width="1.8" height="1.8"/><rect x="141.4" y="88.1" width="1.8" height="1.8"/><rect x="154.2" y="88.1" width="1.8" height="1.8"/><rect x="167.0" y="88.1" width="1.8" height="1.8"/><rect x="179.8" y="88.1" width="1.8" height="1.8"/><rect x="192.6" y="88.1" width="1.8" height="1.8"/><rect x="205.4" y="88.1" width="1.8" height="1.8"/><rect x="218.2" y="88.1" width="1.8" height="1.8"/><rect x="231.0" y="88.1" width="1.8" height="1.8"/><rect x="243.8" y="88.1" width="1.8" height="1.8"/><rect x="256.6" y="88.1" width="1.8" height="1.8"/><rect x="269.4" y="88.1" width="1.8" height="1.8"/><rect x="282.2" y="88.1" width="1.8" height="1.8"/><rect x="295.0" y="88.1" width="1.8" height="1.8"/><rect x="307.8" y="88.1" width="1.8" height="1.8"/><rect x="320.6" y="88.1" width="1.8" height="1.8"/><rect x="333.4" y="88.1" width="1.8" height="1.8"/><rect x="346.2" y="88.1" width="1.8" height="1.8"/><rect x="359.0" y="88.1" width="1.8" height="1.8"/><rect x="371.8" y="88.1" width="1.8" height="1.8"/><rect x="384.6" y="88.1" width="1.8" height="1.8"/><rect x="397.4" y="88.1" width="1.8" height="1.8"/><rect x="410.2" y="88.1" width="1.8" height="1.8"/><rect x="423.0" y="88.1" width="1.8" height="1.8"/><rect x="435.8" y="88.1" width="1.8" height="1.8"/><rect x="448.6" y="88.1" width="1.8" height="1.8"/><rect x="461.4" y="88.1" width="1.8" height="1.8"/><rect x="474.2" y="88.1" width="1.8" height="1.8"/><rect x="487.0" y="88.1" width="1.8" height="1.8"/><rect x="499.8" y="88.1" width="1.8" height="1.8"/><rect x="512.6" y="88.1" width="1.8" height="1.8"/><rect x="525.4" y="88.1" width="1.8" height="1.8"/><rect x="538.2" y="88.1" width="1.8" height="1.8"/><rect x="551.0" y="88.1" width="1.8" height="1.8"/><rect x="563.8" y="88.1" width="1.8" height="1.8"/><rect x="576.6" y="88.1" width="1.8" height="1.8"/><rect x="589.4" y="88.1" width="1.8" height="1.8"/><rect x="602.2" y="88.1" width="1.8" height="1.8"/><rect x="615.0" y="88.1" width="1.8" height="1.8"/><rect x="627.8" y="88.1" width="1.8" height="1.8"/><rect x="640.6" y="88.1" width="1.8" height="1.8"/><rect x="653.4" y="88.1" width="1.8" height="1.8"/><rect x="666.2" y="88.1" width="1.8" height="1.8"/><rect x="679.0" y="88.1" width="1.8" height="1.8"/><rect x="691.8" y="88.1" width="1.8" height="1.8"/><rect x="704.6" y="88.1" width="1.8" height="1.8"/><rect x="717.4" y="88.1" width="1.8" height="1.8"/><rect x="730.2" y="88.1" width="1.8" height="1.8"/><rect x="743.0" y="88.1" width="1.8" height="1.8"/><rect x="755.8" y="88.1" width="1.8" height="1.8"/><rect x="768.6" y="88.1" width="1.8" height="1.8"/><rect x="781.4" y="88.1" width="1.8" height="1.8"/><rect x="794.2" y="88.1" width="1.8" height="1.8"/><rect x="807.0" y="88.1" width="1.8" height="1.8"/><rect x="819.8" y="88.1" width="1.8" height="1.8"/><rect x="832.6" y="88.1" width="1.8" height="1.8"/><rect x="845.4" y="88.1" width="1.8" height="1.8"/><rect x="858.2" y="88.1" width="1.8" height="1.8"/><rect x="871.0" y="88.1" width="1.8" height="1.8"/><rect x="883.8" y="88.1" width="1.8" height="1.8"/><rect x="896.6" y="88.1" width="1.8" height="1.8"/><rect x="909.4" y="88.1" width="1.8" height="1.8"/><rect x="922.2" y="88.1" width="1.8" height="1.8"/><rect x="935.0" y="88.1" width="1.8" height="1.8"/><rect x="947.8" y="88.1" width="1.8" height="1.8"/><rect x="960.6" y="88.1" width="1.8" height="1.8"/><rect x="973.4" y="88.1" width="1.8" height="1.8"/><rect x="986.2" y="88.1" width="1.8" height="1.8"/><rect x="39.0" y="152.1" width="1.8" height="1.8"/><rect x="51.8" y="152.1" width="1.8" height="1.8"/><rect x="64.6" y="152.1" width="1.8" height="1.8"/><rect x="77.4" y="152.1" width="1.8" height="1.8"/><rect x="90.2" y="152.1" width="1.8" height="1.8"/><rect x="103.0" y="152.1" width="1.8" height="1.8"/><rect x="115.8" y="152.1" width="1.8" height="1.8"/><rect x="128.6" y="152.1" width="1.8" height="1.8"/><rect x="141.4" y="152.1" width="1.8" height="1.8"/><rect x="154.2" y="152.1" width="1.8" height="1.8"/><rect x="167.0" y="152.1" width="1.8" height="1.8"/><rect x="179.8" y="152.1" width="1.8" height="1.8"/><rect x="192.6" y="152.1" width="1.8" height="1.8"/><rect x="205.4" y="152.1" width="1.8" height="1.8"/><rect x="218.2" y="152.1" width="1.8" height="1.8"/><rect x="231.0" y="152.1" width="1.8" height="1.8"/><rect x="243.8" y="152.1" width="1.8" height="1.8"/><rect x="256.6" y="152.1" width="1.8" height="1.8"/><rect x="269.4" y="152.1" width="1.8" height="1.8"/><rect x="282.2" y="152.1" width="1.8" height="1.8"/><rect x="295.0" y="152.1" width="1.8" height="1.8"/><rect x="307.8" y="152.1" width="1.8" height="1.8"/><rect x="320.6" y="152.1" width="1.8" height="1.8"/><rect x="333.4" y="152.1" width="1.8" height="1.8"/><rect x="346.2" y="152.1" width="1.8" height="1.8"/><rect x="359.0" y="152.1" width="1.8" height="1.8"/><rect x="371.8" y="152.1" width="1.8" height="1.8"/><rect x="384.6" y="152.1" width="1.8" height="1.8"/><rect x="397.4" y="152.1" width="1.8" height="1.8"/><rect x="410.2" y="152.1" width="1.8" height="1.8"/><rect x="423.0" y="152.1" width="1.8" height="1.8"/><rect x="435.8" y="152.1" width="1.8" height="1.8"/><rect x="448.6" y="152.1" width="1.8" height="1.8"/><rect x="461.4" y="152.1" width="1.8" height="1.8"/><rect x="474.2" y="152.1" width="1.8" height="1.8"/><rect x="487.0" y="152.1" width="1.8" height="1.8"/><rect x="499.8" y="152.1" width="1.8" height="1.8"/><rect x="512.6" y="152.1" width="1.8" height="1.8"/><rect x="525.4" y="152.1" width="1.8" height="1.8"/><rect x="538.2" y="152.1" width="1.8" height="1.8"/><rect x="551.0" y="152.1" width="1.8" height="1.8"/><rect x="563.8" y="152.1" width="1.8" height="1.8"/><rect x="576.6" y="152.1" width="1.8" height="1.8"/><rect x="589.4" y="152.1" width="1.8" height="1.8"/><rect x="602.2" y="152.1" width="1.8" height="1.8"/><rect x="615.0" y="152.1" width="1.8" height="1.8"/><rect x="627.8" y="152.1" width="1.8" height="1.8"/><rect x="640.6" y="152.1" width="1.8" height="1.8"/><rect x="653.4" y="152.1" width="1.8" height="1.8"/><rect x="666.2" y="152.1" width="1.8" height="1.8"/><rect x="679.0" y="152.1" width="1.8" height="1.8"/><rect x="691.8" y="152.1" width="1.8" height="1.8"/><rect x="704.6" y="152.1" width="1.8" height="1.8"/><rect x="717.4" y="152.1" width="1.8" height="1.8"/><rect x="730.2" y="152.1" width="1.8" height="1.8"/><rect x="743.0" y="152.1" width="1.8" height="1.8"/><rect x="755.8" y="152.1" width="1.8" height="1.8"/><rect x="768.6" y="152.1" width="1.8" height="1.8"/><rect x="781.4" y="152.1" width="1.8" height="1.8"/><rect x="794.2" y="152.1" width="1.8" height="1.8"/><rect x="807.0" y="152.1" width="1.8" height="1.8"/><rect x="819.8" y="152.1" width="1.8" height="1.8"/><rect x="832.6" y="152.1" width="1.8" height="1.8"/><rect x="845.4" y="152.1" width="1.8" height="1.8"/><rect x="858.2" y="152.1" width="1.8" height="1.8"/><rect x="871.0" y="152.1" width="1.8" height="1.8"/><rect x="883.8" y="152.1" width="1.8" height="1.8"/><rect x="896.6" y="152.1" width="1.8" height="1.8"/><rect x="909.4" y="152.1" width="1.8" height="1.8"/><rect x="922.2" y="152.1" width="1.8" height="1.8"/><rect x="935.0" y="152.1" width="1.8" height="1.8"/><rect x="947.8" y="152.1" width="1.8" height="1.8"/><rect x="960.6" y="152.1" width="1.8" height="1.8"/><rect x="973.4" y="152.1" width="1.8" height="1.8"/><rect x="986.2" y="152.1" width="1.8" height="1.8"/><rect x="39.0" y="216.1" width="1.8" height="1.8"/><rect x="51.8" y="216.1" width="1.8" height="1.8"/><rect x="64.6" y="216.1" width="1.8" height="1.8"/><rect x="77.4" y="216.1" width="1.8" height="1.8"/><rect x="90.2" y="216.1" width="1.8" height="1.8"/><rect x="103.0" y="216.1" width="1.8" height="1.8"/><rect x="115.8" y="216.1" width="1.8" height="1.8"/><rect x="128.6" y="216.1" width="1.8" height="1.8"/><rect x="141.4" y="216.1" width="1.8" height="1.8"/><rect x="154.2" y="216.1" width="1.8" height="1.8"/><rect x="167.0" y="216.1" width="1.8" height="1.8"/><rect x="179.8" y="216.1" width="1.8" height="1.8"/><rect x="192.6" y="216.1" width="1.8" height="1.8"/><rect x="205.4" y="216.1" width="1.8" height="1.8"/><rect x="218.2" y="216.1" width="1.8" height="1.8"/><rect x="231.0" y="216.1" width="1.8" height="1.8"/><rect x="243.8" y="216.1" width="1.8" height="1.8"/><rect x="256.6" y="216.1" width="1.8" height="1.8"/><rect x="269.4" y="216.1" width="1.8" height="1.8"/><rect x="282.2" y="216.1" width="1.8" height="1.8"/><rect x="295.0" y="216.1" width="1.8" height="1.8"/><rect x="307.8" y="216.1" width="1.8" height="1.8"/><rect x="320.6" y="216.1" width="1.8" height="1.8"/><rect x="333.4" y="216.1" width="1.8" height="1.8"/><rect x="346.2" y="216.1" width="1.8" height="1.8"/><rect x="359.0" y="216.1" width="1.8" height="1.8"/><rect x="371.8" y="216.1" width="1.8" height="1.8"/><rect x="384.6" y="216.1" width="1.8" height="1.8"/><rect x="397.4" y="216.1" width="1.8" height="1.8"/><rect x="410.2" y="216.1" width="1.8" height="1.8"/><rect x="423.0" y="216.1" width="1.8" height="1.8"/><rect x="435.8" y="216.1" width="1.8" height="1.8"/><rect x="448.6" y="216.1" width="1.8" height="1.8"/><rect x="461.4" y="216.1" width="1.8" height="1.8"/><rect x="474.2" y="216.1" width="1.8" height="1.8"/><rect x="487.0" y="216.1" width="1.8" height="1.8"/><rect x="499.8" y="216.1" width="1.8" height="1.8"/><rect x="512.6" y="216.1" width="1.8" height="1.8"/><rect x="525.4" y="216.1" width="1.8" height="1.8"/><rect x="538.2" y="216.1" width="1.8" height="1.8"/><rect x="551.0" y="216.1" width="1.8" height="1.8"/><rect x="563.8" y="216.1" width="1.8" height="1.8"/><rect x="576.6" y="216.1" width="1.8" height="1.8"/><rect x="589.4" y="216.1" width="1.8" height="1.8"/><rect x="602.2" y="216.1" width="1.8" height="1.8"/><rect x="615.0" y="216.1" width="1.8" height="1.8"/><rect x="627.8" y="216.1" width="1.8" height="1.8"/><rect x="640.6" y="216.1" width="1.8" height="1.8"/><rect x="653.4" y="216.1" width="1.8" height="1.8"/><rect x="666.2" y="216.1" width="1.8" height="1.8"/><rect x="679.0" y="216.1" width="1.8" height="1.8"/><rect x="691.8" y="216.1" width="1.8" height="1.8"/><rect x="704.6" y="216.1" width="1.8" height="1.8"/><rect x="717.4" y="216.1" width="1.8" height="1.8"/><rect x="730.2" y="216.1" width="1.8" height="1.8"/><rect x="743.0" y="216.1" width="1.8" height="1.8"/><rect x="755.8" y="216.1" width="1.8" height="1.8"/><rect x="768.6" y="216.1" width="1.8" height="1.8"/><rect x="781.4" y="216.1" width="1.8" height="1.8"/><rect x="794.2" y="216.1" width="1.8" height="1.8"/><rect x="807.0" y="216.1" width="1.8" height="1.8"/><rect x="819.8" y="216.1" width="1.8" height="1.8"/><rect x="832.6" y="216.1" width="1.8" height="1.8"/><rect x="845.4" y="216.1" width="1.8" height="1.8"/><rect x="858.2" y="216.1" width="1.8" height="1.8"/><rect x="871.0" y="216.1" width="1.8" height="1.8"/><rect x="883.8" y="216.1" width="1.8" height="1.8"/><rect x="896.6" y="216.1" width="1.8" height="1.8"/><rect x="909.4" y="216.1" width="1.8" height="1.8"/><rect x="922.2" y="216.1" width="1.8" height="1.8"/><rect x="935.0" y="216.1" width="1.8" height="1.8"/><rect x="947.8" y="216.1" width="1.8" height="1.8"/><rect x="960.6" y="216.1" width="1.8" height="1.8"/><rect x="973.4" y="216.1" width="1.8" height="1.8"/><rect x="986.2" y="216.1" width="1.8" height="1.8"/><rect x="39.0" y="280.1" width="1.8" height="1.8"/><rect x="51.8" y="280.1" width="1.8" height="1.8"/><rect x="64.6" y="280.1" width="1.8" height="1.8"/><rect x="77.4" y="280.1" width="1.8" height="1.8"/><rect x="90.2" y="280.1" width="1.8" height="1.8"/><rect x="103.0" y="280.1" width="1.8" height="1.8"/><rect x="115.8" y="280.1" width="1.8" height="1.8"/><rect x="128.6" y="280.1" width="1.8" height="1.8"/><rect x="141.4" y="280.1" width="1.8" height="1.8"/><rect x="154.2" y="280.1" width="1.8" height="1.8"/><rect x="167.0" y="280.1" width="1.8" height="1.8"/><rect x="179.8" y="280.1" width="1.8" height="1.8"/><rect x="192.6" y="280.1" width="1.8" height="1.8"/><rect x="205.4" y="280.1" width="1.8" height="1.8"/><rect x="218.2" y="280.1" width="1.8" height="1.8"/><rect x="231.0" y="280.1" width="1.8" height="1.8"/><rect x="243.8" y="280.1" width="1.8" height="1.8"/><rect x="256.6" y="280.1" width="1.8" height="1.8"/><rect x="269.4" y="280.1" width="1.8" height="1.8"/><rect x="282.2" y="280.1" width="1.8" height="1.8"/><rect x="295.0" y="280.1" width="1.8" height="1.8"/><rect x="307.8" y="280.1" width="1.8" height="1.8"/><rect x="320.6" y="280.1" width="1.8" height="1.8"/><rect x="333.4" y="280.1" width="1.8" height="1.8"/><rect x="346.2" y="280.1" width="1.8" height="1.8"/><rect x="359.0" y="280.1" width="1.8" height="1.8"/><rect x="371.8" y="280.1" width="1.8" height="1.8"/><rect x="384.6" y="280.1" width="1.8" height="1.8"/><rect x="397.4" y="280.1" width="1.8" height="1.8"/><rect x="410.2" y="280.1" width="1.8" height="1.8"/><rect x="423.0" y="280.1" width="1.8" height="1.8"/><rect x="435.8" y="280.1" width="1.8" height="1.8"/><rect x="448.6" y="280.1" width="1.8" height="1.8"/><rect x="461.4" y="280.1" width="1.8" height="1.8"/><rect x="474.2" y="280.1" width="1.8" height="1.8"/><rect x="487.0" y="280.1" width="1.8" height="1.8"/><rect x="499.8" y="280.1" width="1.8" height="1.8"/><rect x="512.6" y="280.1" width="1.8" height="1.8"/><rect x="525.4" y="280.1" width="1.8" height="1.8"/><rect x="538.2" y="280.1" width="1.8" height="1.8"/><rect x="551.0" y="280.1" width="1.8" height="1.8"/><rect x="563.8" y="280.1" width="1.8" height="1.8"/><rect x="576.6" y="280.1" width="1.8" height="1.8"/><rect x="589.4" y="280.1" width="1.8" height="1.8"/><rect x="602.2" y="280.1" width="1.8" height="1.8"/><rect x="615.0" y="280.1" width="1.8" height="1.8"/><rect x="627.8" y="280.1" width="1.8" height="1.8"/><rect x="640.6" y="280.1" width="1.8" height="1.8"/><rect x="653.4" y="280.1" width="1.8" height="1.8"/><rect x="666.2" y="280.1" width="1.8" height="1.8"/><rect x="679.0" y="280.1" width="1.8" height="1.8"/><rect x="691.8" y="280.1" width="1.8" height="1.8"/><rect x="704.6" y="280.1" width="1.8" height="1.8"/><rect x="717.4" y="280.1" width="1.8" height="1.8"/><rect x="730.2" y="280.1" width="1.8" height="1.8"/><rect x="743.0" y="280.1" width="1.8" height="1.8"/><rect x="755.8" y="280.1" width="1.8" height="1.8"/><rect x="768.6" y="280.1" width="1.8" height="1.8"/><rect x="781.4" y="280.1" width="1.8" height="1.8"/><rect x="794.2" y="280.1" width="1.8" height="1.8"/><rect x="807.0" y="280.1" width="1.8" height="1.8"/><rect x="819.8" y="280.1" width="1.8" height="1.8"/><rect x="832.6" y="280.1" width="1.8" height="1.8"/><rect x="845.4" y="280.1" width="1.8" height="1.8"/><rect x="858.2" y="280.1" width="1.8" height="1.8"/><rect x="871.0" y="280.1" width="1.8" height="1.8"/><rect x="883.8" y="280.1" width="1.8" height="1.8"/><rect x="896.6" y="280.1" width="1.8" height="1.8"/><rect x="909.4" y="280.1" width="1.8" height="1.8"/><rect x="922.2" y="280.1" width="1.8" height="1.8"/><rect x="935.0" y="280.1" width="1.8" height="1.8"/><rect x="947.8" y="280.1" width="1.8" height="1.8"/><rect x="960.6" y="280.1" width="1.8" height="1.8"/><rect x="973.4" y="280.1" width="1.8" height="1.8"/><rect x="986.2" y="280.1" width="1.8" height="1.8"/><rect x="39.0" y="408.1" width="1.8" height="1.8"/><rect x="51.8" y="408.1" width="1.8" height="1.8"/><rect x="64.6" y="408.1" width="1.8" height="1.8"/><rect x="77.4" y="408.1" width="1.8" height="1.8"/><rect x="90.2" y="408.1" width="1.8" height="1.8"/><rect x="103.0" y="408.1" width="1.8" height="1.8"/><rect x="115.8" y="408.1" width="1.8" height="1.8"/><rect x="128.6" y="408.1" width="1.8" height="1.8"/><rect x="141.4" y="408.1" width="1.8" height="1.8"/><rect x="154.2" y="408.1" width="1.8" height="1.8"/><rect x="167.0" y="408.1" width="1.8" height="1.8"/><rect x="179.8" y="408.1" width="1.8" height="1.8"/><rect x="192.6" y="408.1" width="1.8" height="1.8"/><rect x="205.4" y="408.1" width="1.8" height="1.8"/><rect x="218.2" y="408.1" width="1.8" height="1.8"/><rect x="231.0" y="408.1" width="1.8" height="1.8"/><rect x="243.8" y="408.1" width="1.8" height="1.8"/><rect x="256.6" y="408.1" width="1.8" height="1.8"/><rect x="269.4" y="408.1" width="1.8" height="1.8"/><rect x="282.2" y="408.1" width="1.8" height="1.8"/><rect x="295.0" y="408.1" width="1.8" height="1.8"/><rect x="307.8" y="408.1" width="1.8" height="1.8"/><rect x="320.6" y="408.1" width="1.8" height="1.8"/><rect x="333.4" y="408.1" width="1.8" height="1.8"/><rect x="346.2" y="408.1" width="1.8" height="1.8"/><rect x="359.0" y="408.1" width="1.8" height="1.8"/><rect x="371.8" y="408.1" width="1.8" height="1.8"/><rect x="384.6" y="408.1" width="1.8" height="1.8"/><rect x="397.4" y="408.1" width="1.8" height="1.8"/><rect x="410.2" y="408.1" width="1.8" height="1.8"/><rect x="423.0" y="408.1" width="1.8" height="1.8"/><rect x="435.8" y="408.1" width="1.8" height="1.8"/><rect x="448.6" y="408.1" width="1.8" height="1.8"/><rect x="461.4" y="408.1" width="1.8" height="1.8"/><rect x="474.2" y="408.1" width="1.8" height="1.8"/><rect x="487.0" y="408.1" width="1.8" height="1.8"/><rect x="499.8" y="408.1" width="1.8" height="1.8"/><rect x="512.6" y="408.1" width="1.8" height="1.8"/><rect x="525.4" y="408.1" width="1.8" height="1.8"/><rect x="538.2" y="408.1" width="1.8" height="1.8"/><rect x="551.0" y="408.1" width="1.8" height="1.8"/><rect x="563.8" y="408.1" width="1.8" height="1.8"/><rect x="576.6" y="408.1" width="1.8" height="1.8"/><rect x="589.4" y="408.1" width="1.8" height="1.8"/><rect x="602.2" y="408.1" width="1.8" height="1.8"/><rect x="615.0" y="408.1" width="1.8" height="1.8"/><rect x="627.8" y="408.1" width="1.8" height="1.8"/><rect x="640.6" y="408.1" width="1.8" height="1.8"/><rect x="653.4" y="408.1" width="1.8" height="1.8"/><rect x="666.2" y="408.1" width="1.8" height="1.8"/><rect x="679.0" y="408.1" width="1.8" height="1.8"/><rect x="691.8" y="408.1" width="1.8" height="1.8"/><rect x="704.6" y="408.1" width="1.8" height="1.8"/><rect x="717.4" y="408.1" width="1.8" height="1.8"/><rect x="730.2" y="408.1" width="1.8" height="1.8"/><rect x="743.0" y="408.1" width="1.8" height="1.8"/><rect x="755.8" y="408.1" width="1.8" height="1.8"/><rect x="768.6" y="408.1" width="1.8" height="1.8"/><rect x="781.4" y="408.1" width="1.8" height="1.8"/><rect x="794.2" y="408.1" width="1.8" height="1.8"/><rect x="807.0" y="408.1" width="1.8" height="1.8"/><rect x="819.8" y="408.1" width="1.8" height="1.8"/><rect x="832.6" y="408.1" width="1.8" height="1.8"/><rect x="845.4" y="408.1" width="1.8" height="1.8"/><rect x="858.2" y="408.1" width="1.8" height="1.8"/><rect x="871.0" y="408.1" width="1.8" height="1.8"/><rect x="883.8" y="408.1" width="1.8" height="1.8"/><rect x="896.6" y="408.1" width="1.8" height="1.8"/><rect x="909.4" y="408.1" width="1.8" height="1.8"/><rect x="922.2" y="408.1" width="1.8" height="1.8"/><rect x="935.0" y="408.1" width="1.8" height="1.8"/><rect x="947.8" y="408.1" width="1.8" height="1.8"/><rect x="960.6" y="408.1" width="1.8" height="1.8"/><rect x="973.4" y="408.1" width="1.8" height="1.8"/><rect x="986.2" y="408.1" width="1.8" height="1.8"/><rect x="39.0" y="472.1" width="1.8" height="1.8"/><rect x="51.8" y="472.1" width="1.8" height="1.8"/><rect x="64.6" y="472.1" width="1.8" height="1.8"/><rect x="77.4" y="472.1" width="1.8" height="1.8"/><rect x="90.2" y="472.1" width="1.8" height="1.8"/><rect x="103.0" y="472.1" width="1.8" height="1.8"/><rect x="115.8" y="472.1" width="1.8" height="1.8"/><rect x="128.6" y="472.1" width="1.8" height="1.8"/><rect x="141.4" y="472.1" width="1.8" height="1.8"/><rect x="154.2" y="472.1" width="1.8" height="1.8"/><rect x="167.0" y="472.1" width="1.8" height="1.8"/><rect x="179.8" y="472.1" width="1.8" height="1.8"/><rect x="192.6" y="472.1" width="1.8" height="1.8"/><rect x="205.4" y="472.1" width="1.8" height="1.8"/><rect x="218.2" y="472.1" width="1.8" height="1.8"/><rect x="231.0" y="472.1" width="1.8" height="1.8"/><rect x="243.8" y="472.1" width="1.8" height="1.8"/><rect x="256.6" y="472.1" width="1.8" height="1.8"/><rect x="269.4" y="472.1" width="1.8" height="1.8"/><rect x="282.2" y="472.1" width="1.8" height="1.8"/><rect x="295.0" y="472.1" width="1.8" height="1.8"/><rect x="307.8" y="472.1" width="1.8" height="1.8"/><rect x="320.6" y="472.1" width="1.8" height="1.8"/><rect x="333.4" y="472.1" width="1.8" height="1.8"/><rect x="346.2" y="472.1" width="1.8" height="1.8"/><rect x="359.0" y="472.1" width="1.8" height="1.8"/><rect x="371.8" y="472.1" width="1.8" height="1.8"/><rect x="384.6" y="472.1" width="1.8" height="1.8"/><rect x="397.4" y="472.1" width="1.8" height="1.8"/><rect x="410.2" y="472.1" width="1.8" height="1.8"/><rect x="423.0" y="472.1" width="1.8" height="1.8"/><rect x="435.8" y="472.1" width="1.8" height="1.8"/><rect x="448.6" y="472.1" width="1.8" height="1.8"/><rect x="461.4" y="472.1" width="1.8" height="1.8"/><rect x="474.2" y="472.1" width="1.8" height="1.8"/><rect x="487.0" y="472.1" width="1.8" height="1.8"/><rect x="499.8" y="472.1" width="1.8" height="1.8"/><rect x="512.6" y="472.1" width="1.8" height="1.8"/><rect x="525.4" y="472.1" width="1.8" height="1.8"/><rect x="538.2" y="472.1" width="1.8" height="1.8"/><rect x="551.0" y="472.1" width="1.8" height="1.8"/><rect x="563.8" y="472.1" width="1.8" height="1.8"/><rect x="576.6" y="472.1" width="1.8" height="1.8"/><rect x="589.4" y="472.1" width="1.8" height="1.8"/><rect x="602.2" y="472.1" width="1.8" height="1.8"/><rect x="615.0" y="472.1" width="1.8" height="1.8"/><rect x="627.8" y="472.1" width="1.8" height="1.8"/><rect x="640.6" y="472.1" width="1.8" height="1.8"/><rect x="653.4" y="472.1" width="1.8" height="1.8"/><rect x="666.2" y="472.1" width="1.8" height="1.8"/><rect x="679.0" y="472.1" width="1.8" height="1.8"/><rect x="691.8" y="472.1" width="1.8" height="1.8"/><rect x="704.6" y="472.1" width="1.8" height="1.8"/><rect x="717.4" y="472.1" width="1.8" height="1.8"/><rect x="730.2" y="472.1" width="1.8" height="1.8"/><rect x="743.0" y="472.1" width="1.8" height="1.8"/><rect x="755.8" y="472.1" width="1.8" height="1.8"/><rect x="768.6" y="472.1" width="1.8" height="1.8"/><rect x="781.4" y="472.1" width="1.8" height="1.8"/><rect x="794.2" y="472.1" width="1.8" height="1.8"/><rect x="807.0" y="472.1" width="1.8" height="1.8"/><rect x="819.8" y="472.1" width="1.8" height="1.8"/><rect x="832.6" y="472.1" width="1.8" height="1.8"/><rect x="845.4" y="472.1" width="1.8" height="1.8"/><rect x="858.2" y="472.1" width="1.8" height="1.8"/><rect x="871.0" y="472.1" width="1.8" height="1.8"/><rect x="883.8" y="472.1" width="1.8" height="1.8"/><rect x="896.6" y="472.1" width="1.8" height="1.8"/><rect x="909.4" y="472.1" width="1.8" height="1.8"/><rect x="922.2" y="472.1" width="1.8" height="1.8"/><rect x="935.0" y="472.1" width="1.8" height="1.8"/><rect x="947.8" y="472.1" width="1.8" height="1.8"/><rect x="960.6" y="472.1" width="1.8" height="1.8"/><rect x="973.4" y="472.1" width="1.8" height="1.8"/><rect x="986.2" y="472.1" width="1.8" height="1.8"/><rect x="39.0" y="536.1" width="1.8" height="1.8"/><rect x="51.8" y="536.1" width="1.8" height="1.8"/><rect x="64.6" y="536.1" width="1.8" height="1.8"/><rect x="77.4" y="536.1" width="1.8" height="1.8"/><rect x="90.2" y="536.1" width="1.8" height="1.8"/><rect x="103.0" y="536.1" width="1.8" height="1.8"/><rect x="115.8" y="536.1" width="1.8" height="1.8"/><rect x="128.6" y="536.1" width="1.8" height="1.8"/><rect x="141.4" y="536.1" width="1.8" height="1.8"/><rect x="154.2" y="536.1" width="1.8" height="1.8"/><rect x="167.0" y="536.1" width="1.8" height="1.8"/><rect x="179.8" y="536.1" width="1.8" height="1.8"/><rect x="192.6" y="536.1" width="1.8" height="1.8"/><rect x="205.4" y="536.1" width="1.8" height="1.8"/><rect x="218.2" y="536.1" width="1.8" height="1.8"/><rect x="231.0" y="536.1" width="1.8" height="1.8"/><rect x="243.8" y="536.1" width="1.8" height="1.8"/><rect x="256.6" y="536.1" width="1.8" height="1.8"/><rect x="269.4" y="536.1" width="1.8" height="1.8"/><rect x="282.2" y="536.1" width="1.8" height="1.8"/><rect x="295.0" y="536.1" width="1.8" height="1.8"/><rect x="307.8" y="536.1" width="1.8" height="1.8"/><rect x="320.6" y="536.1" width="1.8" height="1.8"/><rect x="333.4" y="536.1" width="1.8" height="1.8"/><rect x="346.2" y="536.1" width="1.8" height="1.8"/><rect x="359.0" y="536.1" width="1.8" height="1.8"/><rect x="371.8" y="536.1" width="1.8" height="1.8"/><rect x="384.6" y="536.1" width="1.8" height="1.8"/><rect x="397.4" y="536.1" width="1.8" height="1.8"/><rect x="410.2" y="536.1" width="1.8" height="1.8"/><rect x="423.0" y="536.1" width="1.8" height="1.8"/><rect x="435.8" y="536.1" width="1.8" height="1.8"/><rect x="448.6" y="536.1" width="1.8" height="1.8"/><rect x="461.4" y="536.1" width="1.8" height="1.8"/><rect x="474.2" y="536.1" width="1.8" height="1.8"/><rect x="487.0" y="536.1" width="1.8" height="1.8"/><rect x="499.8" y="536.1" width="1.8" height="1.8"/><rect x="512.6" y="536.1" width="1.8" height="1.8"/><rect x="525.4" y="536.1" width="1.8" height="1.8"/><rect x="538.2" y="536.1" width="1.8" height="1.8"/><rect x="551.0" y="536.1" width="1.8" height="1.8"/><rect x="563.8" y="536.1" width="1.8" height="1.8"/><rect x="576.6" y="536.1" width="1.8" height="1.8"/><rect x="589.4" y="536.1" width="1.8" height="1.8"/><rect x="602.2" y="536.1" width="1.8" height="1.8"/><rect x="615.0" y="536.1" width="1.8" height="1.8"/><rect x="627.8" y="536.1" width="1.8" height="1.8"/><rect x="640.6" y="536.1" width="1.8" height="1.8"/><rect x="653.4" y="536.1" width="1.8" height="1.8"/><rect x="666.2" y="536.1" width="1.8" height="1.8"/><rect x="679.0" y="536.1" width="1.8" height="1.8"/><rect x="691.8" y="536.1" width="1.8" height="1.8"/><rect x="704.6" y="536.1" width="1.8" height="1.8"/><rect x="717.4" y="536.1" width="1.8" height="1.8"/><rect x="730.2" y="536.1" width="1.8" height="1.8"/><rect x="743.0" y="536.1" width="1.8" height="1.8"/><rect x="755.8" y="536.1" width="1.8" height="1.8"/><rect x="768.6" y="536.1" width="1.8" height="1.8"/><rect x="781.4" y="536.1" width="1.8" height="1.8"/><rect x="794.2" y="536.1" width="1.8" height="1.8"/><rect x="807.0" y="536.1" width="1.8" height="1.8"/><rect x="819.8" y="536.1" width="1.8" height="1.8"/><rect x="832.6" y="536.1" width="1.8" height="1.8"/><rect x="845.4" y="536.1" width="1.8" height="1.8"/><rect x="858.2" y="536.1" width="1.8" height="1.8"/><rect x="871.0" y="536.1" width="1.8" height="1.8"/><rect x="883.8" y="536.1" width="1.8" height="1.8"/><rect x="896.6" y="536.1" width="1.8" height="1.8"/><rect x="909.4" y="536.1" width="1.8" height="1.8"/><rect x="922.2" y="536.1" width="1.8" height="1.8"/><rect x="935.0" y="536.1" width="1.8" height="1.8"/><rect x="947.8" y="536.1" width="1.8" height="1.8"/><rect x="960.6" y="536.1" width="1.8" height="1.8"/><rect x="973.4" y="536.1" width="1.8" height="1.8"/><rect x="986.2" y="536.1" width="1.8" height="1.8"/><rect x="39.0" y="600.1" width="1.8" height="1.8"/><rect x="51.8" y="600.1" width="1.8" height="1.8"/><rect x="64.6" y="600.1" width="1.8" height="1.8"/><rect x="77.4" y="600.1" width="1.8" height="1.8"/><rect x="90.2" y="600.1" width="1.8" height="1.8"/><rect x="103.0" y="600.1" width="1.8" height="1.8"/><rect x="115.8" y="600.1" width="1.8" height="1.8"/><rect x="128.6" y="600.1" width="1.8" height="1.8"/><rect x="141.4" y="600.1" width="1.8" height="1.8"/><rect x="154.2" y="600.1" width="1.8" height="1.8"/><rect x="167.0" y="600.1" width="1.8" height="1.8"/><rect x="179.8" y="600.1" width="1.8" height="1.8"/><rect x="192.6" y="600.1" width="1.8" height="1.8"/><rect x="205.4" y="600.1" width="1.8" height="1.8"/><rect x="218.2" y="600.1" width="1.8" height="1.8"/><rect x="231.0" y="600.1" width="1.8" height="1.8"/><rect x="243.8" y="600.1" width="1.8" height="1.8"/><rect x="256.6" y="600.1" width="1.8" height="1.8"/><rect x="269.4" y="600.1" width="1.8" height="1.8"/><rect x="282.2" y="600.1" width="1.8" height="1.8"/><rect x="295.0" y="600.1" width="1.8" height="1.8"/><rect x="307.8" y="600.1" width="1.8" height="1.8"/><rect x="320.6" y="600.1" width="1.8" height="1.8"/><rect x="333.4" y="600.1" width="1.8" height="1.8"/><rect x="346.2" y="600.1" width="1.8" height="1.8"/><rect x="359.0" y="600.1" width="1.8" height="1.8"/><rect x="371.8" y="600.1" width="1.8" height="1.8"/><rect x="384.6" y="600.1" width="1.8" height="1.8"/><rect x="397.4" y="600.1" width="1.8" height="1.8"/><rect x="410.2" y="600.1" width="1.8" height="1.8"/><rect x="423.0" y="600.1" width="1.8" height="1.8"/><rect x="435.8" y="600.1" width="1.8" height="1.8"/><rect x="448.6" y="600.1" width="1.8" height="1.8"/><rect x="461.4" y="600.1" width="1.8" height="1.8"/><rect x="474.2" y="600.1" width="1.8" height="1.8"/><rect x="487.0" y="600.1" width="1.8" height="1.8"/><rect x="499.8" y="600.1" width="1.8" height="1.8"/><rect x="512.6" y="600.1" width="1.8" height="1.8"/><rect x="525.4" y="600.1" width="1.8" height="1.8"/><rect x="538.2" y="600.1" width="1.8" height="1.8"/><rect x="551.0" y="600.1" width="1.8" height="1.8"/><rect x="563.8" y="600.1" width="1.8" height="1.8"/><rect x="576.6" y="600.1" width="1.8" height="1.8"/><rect x="589.4" y="600.1" width="1.8" height="1.8"/><rect x="602.2" y="600.1" width="1.8" height="1.8"/><rect x="615.0" y="600.1" width="1.8" height="1.8"/><rect x="627.8" y="600.1" width="1.8" height="1.8"/><rect x="640.6" y="600.1" width="1.8" height="1.8"/><rect x="653.4" y="600.1" width="1.8" height="1.8"/><rect x="666.2" y="600.1" width="1.8" height="1.8"/><rect x="679.0" y="600.1" width="1.8" height="1.8"/><rect x="691.8" y="600.1" width="1.8" height="1.8"/><rect x="704.6" y="600.1" width="1.8" height="1.8"/><rect x="717.4" y="600.1" width="1.8" height="1.8"/><rect x="730.2" y="600.1" width="1.8" height="1.8"/><rect x="743.0" y="600.1" width="1.8" height="1.8"/><rect x="755.8" y="600.1" width="1.8" height="1.8"/><rect x="768.6" y="600.1" width="1.8" height="1.8"/><rect x="781.4" y="600.1" width="1.8" height="1.8"/><rect x="794.2" y="600.1" width="1.8" height="1.8"/><rect x="807.0" y="600.1" width="1.8" height="1.8"/><rect x="819.8" y="600.1" width="1.8" height="1.8"/><rect x="832.6" y="600.1" width="1.8" height="1.8"/><rect x="845.4" y="600.1" width="1.8" height="1.8"/><rect x="858.2" y="600.1" width="1.8" height="1.8"/><rect x="871.0" y="600.1" width="1.8" height="1.8"/><rect x="883.8" y="600.1" width="1.8" height="1.8"/><rect x="896.6" y="600.1" width="1.8" height="1.8"/><rect x="909.4" y="600.1" width="1.8" height="1.8"/><rect x="922.2" y="600.1" width="1.8" height="1.8"/><rect x="935.0" y="600.1" width="1.8" height="1.8"/><rect x="947.8" y="600.1" width="1.8" height="1.8"/><rect x="960.6" y="600.1" width="1.8" height="1.8"/><rect x="973.4" y="600.1" width="1.8" height="1.8"/><rect x="986.2" y="600.1" width="1.8" height="1.8"/></g>
<g fill="#e8e8e8"><rect x="39.1" y="343.2" width="1.6" height="3.6"/><rect x="51.9" y="343.2" width="1.6" height="3.6"/><rect x="64.7" y="343.2" width="1.6" height="3.6"/><rect x="77.5" y="343.2" width="1.6" height="3.6"/><rect x="90.3" y="343.2" width="1.6" height="3.6"/><rect x="103.1" y="343.2" width="1.6" height="3.6"/><rect x="115.9" y="343.2" width="1.6" height="3.6"/><rect x="128.7" y="343.2" width="1.6" height="3.6"/><rect x="141.5" y="343.2" width="1.6" height="3.6"/><rect x="154.3" y="343.2" width="1.6" height="3.6"/><rect x="167.1" y="343.2" width="1.6" height="3.6"/><rect x="179.9" y="343.2" width="1.6" height="3.6"/><rect x="192.7" y="343.2" width="1.6" height="3.6"/><rect x="205.5" y="343.2" width="1.6" height="3.6"/><rect x="218.3" y="343.2" width="1.6" height="3.6"/><rect x="231.1" y="343.2" width="1.6" height="3.6"/><rect x="243.9" y="343.2" width="1.6" height="3.6"/><rect x="256.7" y="343.2" width="1.6" height="3.6"/><rect x="269.5" y="343.2" width="1.6" height="3.6"/><rect x="282.3" y="343.2" width="1.6" height="3.6"/><rect x="295.1" y="343.2" width="1.6" height="3.6"/><rect x="307.9" y="343.2" width="1.6" height="3.6"/><rect x="320.7" y="343.2" width="1.6" height="3.6"/><rect x="333.5" y="343.2" width="1.6" height="3.6"/><rect x="346.3" y="343.2" width="1.6" height="3.6"/><rect x="359.1" y="343.2" width="1.6" height="3.6"/><rect x="371.9" y="343.2" width="1.6" height="3.6"/><rect x="384.7" y="343.2" width="1.6" height="3.6"/><rect x="397.5" y="343.2" width="1.6" height="3.6"/><rect x="410.3" y="343.2" width="1.6" height="3.6"/><rect x="423.1" y="343.2" width="1.6" height="3.6"/><rect x="435.9" y="343.2" width="1.6" height="3.6"/><rect x="448.7" y="343.2" width="1.6" height="3.6"/><rect x="461.5" y="343.2" width="1.6" height="3.6"/><rect x="474.3" y="343.2" width="1.6" height="3.6"/><rect x="487.1" y="343.2" width="1.6" height="3.6"/><rect x="499.9" y="343.2" width="1.6" height="3.6"/><rect x="512.7" y="343.2" width="1.6" height="3.6"/><rect x="525.5" y="343.2" width="1.6" height="3.6"/><rect x="538.3" y="343.2" width="1.6" height="3.6"/><rect x="551.1" y="343.2" width="1.6" height="3.6"/><rect x="563.9" y="343.2" width="1.6" height="3.6"/><rect x="576.7" y="343.2" width="1.6" height="3.6"/><rect x="589.5" y="343.2" width="1.6" height="3.6"/><rect x="602.3" y="343.2" width="1.6" height="3.6"/><rect x="615.1" y="343.2" width="1.6" height="3.6"/><rect x="627.9" y="343.2" width="1.6" height="3.6"/><rect x="640.7" y="343.2" width="1.6" height="3.6"/><rect x="653.5" y="343.2" width="1.6" height="3.6"/><rect x="666.3" y="343.2" width="1.6" height="3.6"/><rect x="679.1" y="343.2" width="1.6" height="3.6"/><rect x="691.9" y="343.2" width="1.6" height="3.6"/><rect x="704.7" y="343.2" width="1.6" height="3.6"/><rect x="717.5" y="343.2" width="1.6" height="3.6"/><rect x="730.3" y="343.2" width="1.6" height="3.6"/><rect x="743.1" y="343.2" width="1.6" height="3.6"/><rect x="755.9" y="343.2" width="1.6" height="3.6"/><rect x="768.7" y="343.2" width="1.6" height="3.6"/><rect x="781.5" y="343.2" width="1.6" height="3.6"/><rect x="794.3" y="343.2" width="1.6" height="3.6"/><rect x="807.1" y="343.2" width="1.6" height="3.6"/><rect x="819.9" y="343.2" width="1.6" height="3.6"/><rect x="832.7" y="343.2" width="1.6" height="3.6"/><rect x="845.5" y="343.2" width="1.6" height="3.6"/><rect x="858.3" y="343.2" width="1.6" height="3.6"/><rect x="871.1" y="343.2" width="1.6" height="3.6"/><rect x="883.9" y="343.2" width="1.6" height="3.6"/><rect x="896.7" y="343.2" width="1.6" height="3.6"/><rect x="909.5" y="343.2" width="1.6" height="3.6"/><rect x="922.3" y="343.2" width="1.6" height="3.6"/><rect x="935.1" y="343.2" width="1.6" height="3.6"/><rect x="947.9" y="343.2" width="1.6" height="3.6"/><rect x="960.7" y="343.2" width="1.6" height="3.6"/><rect x="973.5" y="343.2" width="1.6" height="3.6"/><rect x="986.3" y="343.2" width="1.6" height="3.6"/><rect x="511.7" y="37.0" width="3.6" height="1.6"/><rect x="511.7" y="49.8" width="3.6" height="1.6"/><rect x="511.7" y="62.6" width="3.6" height="1.6"/><rect x="511.7" y="75.4" width="3.6" height="1.6"/><rect x="511.7" y="88.2" width="3.6" height="1.6"/><rect x="511.7" y="101.0" width="3.6" height="1.6"/><rect x="511.7" y="113.8" width="3.6" height="1.6"/><rect x="511.7" y="126.6" width="3.6" height="1.6"/><rect x="511.7" y="139.4" width="3.6" height="1.6"/><rect x="511.7" y="152.2" width="3.6" height="1.6"/><rect x="511.7" y="165.0" width="3.6" height="1.6"/><rect x="511.7" y="177.8" width="3.6" height="1.6"/><rect x="511.7" y="190.6" width="3.6" height="1.6"/><rect x="511.7" y="203.4" width="3.6" height="1.6"/><rect x="511.7" y="216.2" width="3.6" height="1.6"/><rect x="511.7" y="229.0" width="3.6" height="1.6"/><rect x="511.7" y="241.8" width="3.6" height="1.6"/><rect x="511.7" y="254.6" width="3.6" height="1.6"/><rect x="511.7" y="267.4" width="3.6" height="1.6"/><rect x="511.7" y="280.2" width="3.6" height="1.6"/><rect x="511.7" y="293.0" width="3.6" height="1.6"/><rect x="511.7" y="305.8" width="3.6" height="1.6"/><rect x="511.7" y="318.6" width="3.6" height="1.6"/><rect x="511.7" y="331.4" width="3.6" height="1.6"/><rect x="511.7" y="357.0" width="3.6" height="1.6"/><rect x="511.7" y="369.8" width="3.6" height="1.6"/><rect x="511.7" y="382.6" width="3.6" height="1.6"/><rect x="511.7" y="395.4" width="3.6" height="1.6"/><rect x="511.7" y="408.2" width="3.6" height="1.6"/><rect x="511.7" y="421.0" width="3.6" height="1.6"/><rect x="511.7" y="433.8" width="3.6" height="1.6"/><rect x="511.7" y="446.6" width="3.6" height="1.6"/><rect x="511.7" y="459.4" width="3.6" height="1.6"/><rect x="511.7" y="472.2" width="3.6" height="1.6"/><rect x="511.7" y="485.0" width="3.6" height="1.6"/><rect x="511.7" y="497.8" width="3.6" height="1.6"/><rect x="511.7" y="510.6" width="3.6" height="1.6"/><rect x="511.7" y="523.4" width="3.6" height="1.6"/><rect x="511.7" y="536.2" width="3.6" height="1.6"/><rect x="511.7" y="549.0" width="3.6" height="1.6"/><rect x="511.7" y="561.8" width="3.6" height="1.6"/><rect x="511.7" y="574.6" width="3.6" height="1.6"/><rect x="511.7" y="587.4" width="3.6" height="1.6"/><rect x="511.7" y="600.2" width="3.6" height="1.6"/><rect x="511.7" y="613.0" width="3.6" height="1.6"/><rect x="511.7" y="625.8" width="3.6" height="1.6"/><rect x="511.7" y="638.6" width="3.6" height="1.6"/><rect x="511.7" y="651.4" width="3.6" height="1.6"/><rect x="186.5" y="344.2" width="14" height="1.6"/><rect x="192.7" y="338.0" width="1.6" height="14"/><rect x="826.5" y="344.2" width="14" height="1.6"/><rect x="832.7" y="338.0" width="1.6" height="14"/><rect x="512.0" y="343.5" width="3" height="3"/></g>
<g fill="#e8e8e8"><rect x="39.15" y="27.0" width="1.5" height="3.5"/><rect x="39.15" y="658.0" width="1.5" height="3.5"/><rect x="51.95" y="27.0" width="1.5" height="3.5"/><rect x="51.95" y="658.0" width="1.5" height="3.5"/><rect x="64.75" y="27.0" width="1.5" height="7"/><rect x="64.75" y="654.5" width="1.5" height="7"/><rect x="77.55" y="27.0" width="1.5" height="3.5"/><rect x="77.55" y="658.0" width="1.5" height="3.5"/><rect x="90.35" y="27.0" width="1.5" height="3.5"/><rect x="90.35" y="658.0" width="1.5" height="3.5"/><rect x="103.15" y="27.0" width="1.5" height="3.5"/><rect x="103.15" y="658.0" width="1.5" height="3.5"/><rect x="115.95" y="27.0" width="1.5" height="3.5"/><rect x="115.95" y="658.0" width="1.5" height="3.5"/><rect x="128.75" y="27.0" width="1.5" height="7"/><rect x="128.75" y="654.5" width="1.5" height="7"/><rect x="141.55" y="27.0" width="1.5" height="3.5"/><rect x="141.55" y="658.0" width="1.5" height="3.5"/><rect x="154.35" y="27.0" width="1.5" height="3.5"/><rect x="154.35" y="658.0" width="1.5" height="3.5"/><rect x="167.15" y="27.0" width="1.5" height="3.5"/><rect x="167.15" y="658.0" width="1.5" height="3.5"/><rect x="179.95" y="27.0" width="1.5" height="3.5"/><rect x="179.95" y="658.0" width="1.5" height="3.5"/><rect x="192.75" y="27.0" width="1.5" height="7"/><rect x="192.75" y="654.5" width="1.5" height="7"/><rect x="205.55" y="27.0" width="1.5" height="3.5"/><rect x="205.55" y="658.0" width="1.5" height="3.5"/><rect x="218.35" y="27.0" width="1.5" height="3.5"/><rect x="218.35" y="658.0" width="1.5" height="3.5"/><rect x="231.15" y="27.0" width="1.5" height="3.5"/><rect x="231.15" y="658.0" width="1.5" height="3.5"/><rect x="243.95" y="27.0" width="1.5" height="3.5"/><rect x="243.95" y="658.0" width="1.5" height="3.5"/><rect x="256.75" y="27.0" width="1.5" height="7"/><rect x="256.75" y="654.5" width="1.5" height="7"/><rect x="269.55" y="27.0" width="1.5" height="3.5"/><rect x="269.55" y="658.0" width="1.5" height="3.5"/><rect x="282.35" y="27.0" width="1.5" height="3.5"/><rect x="282.35" y="658.0" width="1.5" height="3.5"/><rect x="295.15" y="27.0" width="1.5" height="3.5"/><rect x="295.15" y="658.0" width="1.5" height="3.5"/><rect x="307.95" y="27.0" width="1.5" height="3.5"/><rect x="307.95" y="658.0" width="1.5" height="3.5"/><rect x="320.75" y="27.0" width="1.5" height="7"/><rect x="320.75" y="654.5" width="1.5" height="7"/><rect x="333.55" y="27.0" width="1.5" height="3.5"/><rect x="333.55" y="658.0" width="1.5" height="3.5"/><rect x="346.35" y="27.0" width="1.5" height="3.5"/><rect x="346.35" y="658.0" width="1.5" height="3.5"/><rect x="359.15" y="27.0" width="1.5" height="3.5"/><rect x="359.15" y="658.0" width="1.5" height="3.5"/><rect x="371.95" y="27.0" width="1.5" height="3.5"/><rect x="371.95" y="658.0" width="1.5" height="3.5"/><rect x="384.75" y="27.0" width="1.5" height="7"/><rect x="384.75" y="654.5" width="1.5" height="7"/><rect x="397.55" y="27.0" width="1.5" height="3.5"/><rect x="397.55" y="658.0" width="1.5" height="3.5"/><rect x="410.35" y="27.0" width="1.5" height="3.5"/><rect x="410.35" y="658.0" width="1.5" height="3.5"/><rect x="423.15" y="27.0" width="1.5" height="3.5"/><rect x="423.15" y="658.0" width="1.5" height="3.5"/><rect x="435.95" y="27.0" width="1.5" height="3.5"/><rect x="435.95" y="658.0" width="1.5" height="3.5"/><rect x="448.75" y="27.0" width="1.5" height="7"/><rect x="448.75" y="654.5" width="1.5" height="7"/><rect x="461.55" y="27.0" width="1.5" height="3.5"/><rect x="461.55" y="658.0" width="1.5" height="3.5"/><rect x="474.35" y="27.0" width="1.5" height="3.5"/><rect x="474.35" y="658.0" width="1.5" height="3.5"/><rect x="487.15" y="27.0" width="1.5" height="3.5"/><rect x="487.15" y="658.0" width="1.5" height="3.5"/><rect x="499.95" y="27.0" width="1.5" height="3.5"/><rect x="499.95" y="658.0" width="1.5" height="3.5"/><rect x="512.75" y="27.0" width="1.5" height="7"/><rect x="512.75" y="654.5" width="1.5" height="7"/><rect x="525.55" y="27.0" width="1.5" height="3.5"/><rect x="525.55" y="658.0" width="1.5" height="3.5"/><rect x="538.35" y="27.0" width="1.5" height="3.5"/><rect x="538.35" y="658.0" width="1.5" height="3.5"/><rect x="551.15" y="27.0" width="1.5" height="3.5"/><rect x="551.15" y="658.0" width="1.5" height="3.5"/><rect x="563.95" y="27.0" width="1.5" height="3.5"/><rect x="563.95" y="658.0" width="1.5" height="3.5"/><rect x="576.75" y="27.0" width="1.5" height="7"/><rect x="576.75" y="654.5" width="1.5" height="7"/><rect x="589.55" y="27.0" width="1.5" height="3.5"/><rect x="589.55" y="658.0" width="1.5" height="3.5"/><rect x="602.35" y="27.0" width="1.5" height="3.5"/><rect x="602.35" y="658.0" width="1.5" height="3.5"/><rect x="615.15" y="27.0" width="1.5" height="3.5"/><rect x="615.15" y="658.0" width="1.5" height="3.5"/><rect x="627.95" y="27.0" width="1.5" height="3.5"/><rect x="627.95" y="658.0" width="1.5" height="3.5"/><rect x="640.75" y="27.0" width="1.5" height="7"/><rect x="640.75" y="654.5" width="1.5" height="7"/><rect x="653.55" y="27.0" width="1.5" height="3.5"/><rect x="653.55" y="658.0" width="1.5" height="3.5"/><rect x="666.35" y="27.0" width="1.5" height="3.5"/><rect x="666.35" y="658.0" width="1.5" height="3.5"/><rect x="679.15" y="27.0" width="1.5" height="3.5"/><rect x="679.15" y="658.0" width="1.5" height="3.5"/><rect x="691.95" y="27.0" width="1.5" height="3.5"/><rect x="691.95" y="658.0" width="1.5" height="3.5"/><rect x="704.75" y="27.0" width="1.5" height="7"/><rect x="704.75" y="654.5" width="1.5" height="7"/><rect x="717.55" y="27.0" width="1.5" height="3.5"/><rect x="717.55" y="658.0" width="1.5" height="3.5"/><rect x="730.35" y="27.0" width="1.5" height="3.5"/><rect x="730.35" y="658.0" width="1.5" height="3.5"/><rect x="743.15" y="27.0" width="1.5" height="3.5"/><rect x="743.15" y="658.0" width="1.5" height="3.5"/><rect x="755.95" y="27.0" width="1.5" height="3.5"/><rect x="755.95" y="658.0" width="1.5" height="3.5"/><rect x="768.75" y="27.0" width="1.5" height="7"/><rect x="768.75" y="654.5" width="1.5" height="7"/><rect x="781.55" y="27.0" width="1.5" height="3.5"/><rect x="781.55" y="658.0" width="1.5" height="3.5"/><rect x="794.35" y="27.0" width="1.5" height="3.5"/><rect x="794.35" y="658.0" width="1.5" height="3.5"/><rect x="807.15" y="27.0" width="1.5" height="3.5"/><rect x="807.15" y="658.0" width="1.5" height="3.5"/><rect x="819.95" y="27.0" width="1.5" height="3.5"/><rect x="819.95" y="658.0" width="1.5" height="3.5"/><rect x="832.75" y="27.0" width="1.5" height="7"/><rect x="832.75" y="654.5" width="1.5" height="7"/><rect x="845.55" y="27.0" width="1.5" height="3.5"/><rect x="845.55" y="658.0" width="1.5" height="3.5"/><rect x="858.35" y="27.0" width="1.5" height="3.5"/><rect x="858.35" y="658.0" width="1.5" height="3.5"/><rect x="871.15" y="27.0" width="1.5" height="3.5"/><rect x="871.15" y="658.0" width="1.5" height="3.5"/><rect x="883.95" y="27.0" width="1.5" height="3.5"/><rect x="883.95" y="658.0" width="1.5" height="3.5"/><rect x="896.75" y="27.0" width="1.5" height="7"/><rect x="896.75" y="654.5" width="1.5" height="7"/><rect x="909.55" y="27.0" width="1.5" height="3.5"/><rect x="909.55" y="658.0" width="1.5" height="3.5"/><rect x="922.35" y="27.0" width="1.5" height="3.5"/><rect x="922.35" y="658.0" width="1.5" height="3.5"/><rect x="935.15" y="27.0" width="1.5" height="3.5"/><rect x="935.15" y="658.0" width="1.5" height="3.5"/><rect x="947.95" y="27.0" width="1.5" height="3.5"/><rect x="947.95" y="658.0" width="1.5" height="3.5"/><rect x="960.75" y="27.0" width="1.5" height="7"/><rect x="960.75" y="654.5" width="1.5" height="7"/><rect x="973.55" y="27.0" width="1.5" height="3.5"/><rect x="973.55" y="658.0" width="1.5" height="3.5"/><rect x="986.35" y="27.0" width="1.5" height="3.5"/><rect x="986.35" y="658.0" width="1.5" height="3.5"/><rect x="28.0" y="37.05" width="4" height="1.5"/><rect x="991.5" y="37.05" width="4" height="1.5"/><rect x="28.0" y="49.85" width="4" height="1.5"/><rect x="991.5" y="49.85" width="4" height="1.5"/><rect x="28.0" y="62.65" width="4" height="1.5"/><rect x="991.5" y="62.65" width="4" height="1.5"/><rect x="28.0" y="75.45" width="4" height="1.5"/><rect x="991.5" y="75.45" width="4" height="1.5"/><rect x="28.0" y="88.25" width="7.5" height="1.5"/><rect x="988.0" y="88.25" width="7.5" height="1.5"/><rect x="28.0" y="101.05" width="4" height="1.5"/><rect x="991.5" y="101.05" width="4" height="1.5"/><rect x="28.0" y="113.85" width="4" height="1.5"/><rect x="991.5" y="113.85" width="4" height="1.5"/><rect x="28.0" y="126.65" width="4" height="1.5"/><rect x="991.5" y="126.65" width="4" height="1.5"/><rect x="28.0" y="139.45" width="4" height="1.5"/><rect x="991.5" y="139.45" width="4" height="1.5"/><rect x="28.0" y="152.25" width="7.5" height="1.5"/><rect x="988.0" y="152.25" width="7.5" height="1.5"/><rect x="28.0" y="165.05" width="4" height="1.5"/><rect x="991.5" y="165.05" width="4" height="1.5"/><rect x="28.0" y="177.85" width="4" height="1.5"/><rect x="991.5" y="177.85" width="4" height="1.5"/><rect x="28.0" y="190.65" width="4" height="1.5"/><rect x="991.5" y="190.65" width="4" height="1.5"/><rect x="28.0" y="203.45" width="4" height="1.5"/><rect x="991.5" y="203.45" width="4" height="1.5"/><rect x="28.0" y="216.25" width="7.5" height="1.5"/><rect x="988.0" y="216.25" width="7.5" height="1.5"/><rect x="28.0" y="229.05" width="4" height="1.5"/><rect x="991.5" y="229.05" width="4" height="1.5"/><rect x="28.0" y="241.85" width="4" height="1.5"/><rect x="991.5" y="241.85" width="4" height="1.5"/><rect x="28.0" y="254.65" width="4" height="1.5"/><rect x="991.5" y="254.65" width="4" height="1.5"/><rect x="28.0" y="267.45" width="4" height="1.5"/><rect x="991.5" y="267.45" width="4" height="1.5"/><rect x="28.0" y="280.25" width="7.5" height="1.5"/><rect x="988.0" y="280.25" width="7.5" height="1.5"/><rect x="28.0" y="293.05" width="4" height="1.5"/><rect x="991.5" y="293.05" width="4" height="1.5"/><rect x="28.0" y="305.85" width="4" height="1.5"/><rect x="991.5" y="305.85" width="4" height="1.5"/><rect x="28.0" y="318.65" width="4" height="1.5"/><rect x="991.5" y="318.65" width="4" height="1.5"/><rect x="28.0" y="331.45" width="4" height="1.5"/><rect x="991.5" y="331.45" width="4" height="1.5"/><rect x="28.0" y="344.25" width="7.5" height="1.5"/><rect x="988.0" y="344.25" width="7.5" height="1.5"/><rect x="28.0" y="357.05" width="4" height="1.5"/><rect x="991.5" y="357.05" width="4" height="1.5"/><rect x="28.0" y="369.85" width="4" height="1.5"/><rect x="991.5" y="369.85" width="4" height="1.5"/><rect x="28.0" y="382.65" width="4" height="1.5"/><rect x="991.5" y="382.65" width="4" height="1.5"/><rect x="28.0" y="395.45" width="4" height="1.5"/><rect x="991.5" y="395.45" width="4" height="1.5"/><rect x="28.0" y="408.25" width="7.5" height="1.5"/><rect x="988.0" y="408.25" width="7.5" height="1.5"/><rect x="28.0" y="421.05" width="4" height="1.5"/><rect x="991.5" y="421.05" width="4" height="1.5"/><rect x="28.0" y="433.85" width="4" height="1.5"/><rect x="991.5" y="433.85" width="4" height="1.5"/><rect x="28.0" y="446.65" width="4" height="1.5"/><rect x="991.5" y="446.65" width="4" height="1.5"/><rect x="28.0" y="459.45" width="4" height="1.5"/><rect x="991.5" y="459.45" width="4" height="1.5"/><rect x="28.0" y="472.25" width="7.5" height="1.5"/><rect x="988.0" y="472.25" width="7.5" height="1.5"/><rect x="28.0" y="485.05" width="4" height="1.5"/><rect x="991.5" y="485.05" width="4" height="1.5"/><rect x="28.0" y="497.85" width="4" height="1.5"/><rect x="991.5" y="497.85" width="4" height="1.5"/><rect x="28.0" y="510.65" width="4" height="1.5"/><rect x="991.5" y="510.65" width="4" height="1.5"/><rect x="28.0" y="523.45" width="4" height="1.5"/><rect x="991.5" y="523.45" width="4" height="1.5"/><rect x="28.0" y="536.25" width="7.5" height="1.5"/><rect x="988.0" y="536.25" width="7.5" height="1.5"/><rect x="28.0" y="549.05" width="4" height="1.5"/><rect x="991.5" y="549.05" width="4" height="1.5"/><rect x="28.0" y="561.85" width="4" height="1.5"/><rect x="991.5" y="561.85" width="4" height="1.5"/><rect x="28.0" y="574.65" width="4" height="1.5"/><rect x="991.5" y="574.65" width="4" height="1.5"/><rect x="28.0" y="587.45" width="4" height="1.5"/><rect x="991.5" y="587.45" width="4" height="1.5"/><rect x="28.0" y="600.25" width="7.5" height="1.5"/><rect x="988.0" y="600.25" width="7.5" height="1.5"/><rect x="28.0" y="613.05" width="4" height="1.5"/><rect x="991.5" y="613.05" width="4" height="1.5"/><rect x="28.0" y="625.85" width="4" height="1.5"/><rect x="991.5" y="625.85" width="4" height="1.5"/><rect x="28.0" y="638.65" width="4" height="1.5"/><rect x="991.5" y="638.65" width="4" height="1.5"/><rect x="28.0" y="651.45" width="4" height="1.5"/><rect x="991.5" y="651.45" width="4" height="1.5"/></g>
<rect x="28.0" y="151.2" width="967.5" height="6.3" fill="#ee0a0a"/><g fill="#c80808"><rect x="28.0" y="150.7" width="1.5" height="6.8"/><rect x="29.5" y="150.2" width="1.5" height="7.3"/><rect x="31.0" y="151.2" width="1.5" height="7.3"/><rect x="34.0" y="149.7" width="1.5" height="7.8"/><rect x="35.5" y="149.7" width="1.5" height="7.8"/><rect x="38.5" y="150.2" width="1.5" height="7.8"/><rect x="41.5" y="151.2" width="1.5" height="7.3"/><rect x="43.0" y="150.2" width="1.5" height="7.3"/><rect x="44.5" y="149.7" width="1.5" height="7.8"/><rect x="46.0" y="151.2" width="1.5" height="7.3"/><rect x="47.5" y="151.2" width="1.5" height="7.3"/><rect x="49.0" y="149.7" width="1.5" height="8.3"/><rect x="52.0" y="151.2" width="1.5" height="7.3"/><rect x="55.0" y="150.2" width="1.5" height="7.3"/><rect x="56.5" y="149.7" width="1.5" height="7.8"/><rect x="58.0" y="149.7" width="1.5" height="7.8"/><rect x="59.5" y="149.7" width="1.5" height="7.8"/><rect x="61.0" y="151.2" width="1.5" height="7.3"/><rect x="62.5" y="149.7" width="1.5" height="7.8"/><rect x="64.0" y="150.7" width="1.5" height="6.8"/><rect x="65.5" y="149.7" width="1.5" height="7.8"/><rect x="67.0" y="149.7" width="1.5" height="7.8"/><rect x="68.5" y="149.7" width="1.5" height="7.8"/><rect x="70.0" y="150.2" width="1.5" height="8.3"/><rect x="71.5" y="150.2" width="1.5" height="7.3"/><rect x="73.0" y="150.2" width="1.5" height="8.3"/><rect x="74.5" y="150.2" width="1.5" height="7.3"/><rect x="76.0" y="150.7" width="1.5" height="6.8"/><rect x="79.0" y="151.2" width="1.5" height="7.3"/><rect x="80.5" y="150.7" width="1.5" height="7.8"/><rect x="82.0" y="150.2" width="1.5" height="7.3"/><rect x="83.5" y="149.2" width="1.5" height="8.8"/><rect x="85.0" y="150.7" width="1.5" height="7.8"/><rect x="88.0" y="149.7" width="1.5" height="8.3"/><rect x="91.0" y="151.2" width="1.5" height="6.8"/><rect x="92.5" y="150.2" width="1.5" height="7.3"/><rect x="94.0" y="149.2" width="1.5" height="8.3"/><rect x="95.5" y="149.7" width="1.5" height="8.8"/><rect x="97.0" y="150.7" width="1.5" height="6.8"/><rect x="98.5" y="149.2" width="1.5" height="8.3"/><rect x="100.0" y="149.7" width="1.5" height="8.3"/><rect x="101.5" y="149.7" width="1.5" height="8.3"/><rect x="104.5" y="150.7" width="1.5" height="7.3"/><rect x="106.0" y="149.2" width="1.5" height="8.3"/><rect x="109.0" y="149.2" width="1.5" height="9.3"/><rect x="110.5" y="149.2" width="1.5" height="8.8"/><rect x="112.0" y="150.7" width="1.5" height="7.3"/><rect x="113.5" y="149.2" width="1.5" height="8.3"/><rect x="115.0" y="151.2" width="1.5" height="6.8"/><rect x="116.5" y="150.7" width="1.5" height="6.8"/><rect x="118.0" y="149.7" width="1.5" height="7.8"/><rect x="119.5" y="150.2" width="1.5" height="7.3"/><rect x="124.0" y="150.2" width="1.5" height="7.8"/><rect x="125.5" y="150.2" width="1.5" height="7.3"/><rect x="127.0" y="151.2" width="1.5" height="6.8"/><rect x="128.5" y="150.2" width="1.5" height="8.3"/><rect x="130.0" y="150.7" width="1.5" height="6.8"/><rect x="131.5" y="150.2" width="1.5" height="8.3"/><rect x="133.0" y="150.7" width="1.5" height="7.3"/><rect x="134.5" y="150.7" width="1.5" height="7.3"/><rect x="140.5" y="149.2" width="1.5" height="8.3"/><rect x="142.0" y="151.2" width="1.5" height="6.8"/><rect x="143.5" y="149.7" width="1.5" height="7.8"/><rect x="145.0" y="150.7" width="1.5" height="6.8"/><rect x="148.0" y="150.2" width="1.5" height="8.3"/><rect x="149.5" y="150.7" width="1.5" height="7.8"/><rect x="151.0" y="149.7" width="1.5" height="7.8"/><rect x="152.5" y="151.2" width="1.5" height="7.3"/><rect x="154.0" y="149.7" width="1.5" height="7.8"/><rect x="155.5" y="150.2" width="1.5" height="8.3"/><rect x="157.0" y="150.2" width="1.5" height="7.8"/><rect x="158.5" y="150.2" width="1.5" height="7.8"/><rect x="160.0" y="151.2" width="1.5" height="6.8"/><rect x="161.5" y="149.2" width="1.5" height="8.8"/><rect x="166.0" y="150.2" width="1.5" height="7.3"/><rect x="169.0" y="149.7" width="1.5" height="7.8"/><rect x="172.0" y="149.7" width="1.5" height="7.8"/><rect x="173.5" y="149.7" width="1.5" height="7.8"/><rect x="175.0" y="150.7" width="1.5" height="7.8"/><rect x="178.0" y="151.2" width="1.5" height="7.3"/><rect x="179.5" y="150.2" width="1.5" height="7.3"/><rect x="181.0" y="149.2" width="1.5" height="8.3"/><rect x="182.5" y="150.7" width="1.5" height="7.8"/><rect x="184.0" y="150.7" width="1.5" height="7.3"/><rect x="187.0" y="150.2" width="1.5" height="7.8"/><rect x="188.5" y="150.2" width="1.5" height="7.8"/><rect x="190.0" y="150.7" width="1.5" height="6.8"/><rect x="193.0" y="149.2" width="1.5" height="8.3"/><rect x="194.5" y="149.2" width="1.5" height="8.3"/><rect x="196.0" y="150.2" width="1.5" height="7.3"/><rect x="197.5" y="149.7" width="1.5" height="7.8"/><rect x="199.0" y="151.2" width="1.5" height="7.3"/><rect x="200.5" y="150.7" width="1.5" height="6.8"/><rect x="202.0" y="149.2" width="1.5" height="9.3"/><rect x="203.5" y="151.2" width="1.5" height="7.3"/><rect x="205.0" y="150.7" width="1.5" height="6.8"/><rect x="206.5" y="149.2" width="1.5" height="8.3"/><rect x="208.0" y="149.7" width="1.5" height="7.8"/><rect x="211.0" y="151.2" width="1.5" height="7.3"/><rect x="212.5" y="149.7" width="1.5" height="8.8"/><rect x="214.0" y="150.7" width="1.5" height="6.8"/><rect x="215.5" y="149.7" width="1.5" height="7.8"/><rect x="217.0" y="151.2" width="1.5" height="6.8"/><rect x="218.5" y="149.2" width="1.5" height="8.3"/><rect x="220.0" y="151.2" width="1.5" height="7.3"/><rect x="221.5" y="150.2" width="1.5" height="7.3"/><rect x="223.0" y="149.2" width="1.5" height="8.3"/><rect x="226.0" y="150.2" width="1.5" height="7.3"/><rect x="227.5" y="151.2" width="1.5" height="7.3"/><rect x="229.0" y="150.7" width="1.5" height="7.3"/><rect x="230.5" y="149.2" width="1.5" height="8.3"/><rect x="232.0" y="150.7" width="1.5" height="6.8"/><rect x="235.0" y="151.2" width="1.5" height="6.8"/><rect x="238.0" y="151.2" width="1.5" height="6.8"/><rect x="239.5" y="149.7" width="1.5" height="8.8"/><rect x="241.0" y="151.2" width="1.5" height="6.8"/><rect x="242.5" y="149.2" width="1.5" height="8.3"/><rect x="244.0" y="149.2" width="1.5" height="8.3"/><rect x="245.5" y="149.2" width="1.5" height="8.3"/><rect x="247.0" y="150.2" width="1.5" height="7.3"/><rect x="248.5" y="150.2" width="1.5" height="7.3"/><rect x="250.0" y="150.2" width="1.5" height="7.3"/><rect x="251.5" y="151.2" width="1.5" height="6.8"/><rect x="253.0" y="150.2" width="1.5" height="7.8"/><rect x="254.5" y="149.2" width="1.5" height="8.3"/><rect x="256.0" y="149.2" width="1.5" height="8.3"/><rect x="260.5" y="149.7" width="1.5" height="8.3"/><rect x="262.0" y="149.2" width="1.5" height="8.3"/><rect x="263.5" y="149.7" width="1.5" height="8.8"/><rect x="265.0" y="150.2" width="1.5" height="7.3"/><rect x="266.5" y="151.2" width="1.5" height="7.3"/><rect x="268.0" y="149.7" width="1.5" height="7.8"/><rect x="271.0" y="149.2" width="1.5" height="8.3"/><rect x="272.5" y="149.7" width="1.5" height="7.8"/><rect x="274.0" y="150.2" width="1.5" height="7.3"/><rect x="277.0" y="150.7" width="1.5" height="6.8"/><rect x="278.5" y="150.7" width="1.5" height="7.8"/><rect x="280.0" y="151.2" width="1.5" height="7.3"/><rect x="281.5" y="150.7" width="1.5" height="6.8"/><rect x="283.0" y="149.7" width="1.5" height="8.3"/><rect x="286.0" y="149.2" width="1.5" height="8.3"/><rect x="287.5" y="150.2" width="1.5" height="8.3"/><rect x="289.0" y="149.7" width="1.5" height="8.3"/><rect x="290.5" y="149.7" width="1.5" height="7.8"/><rect x="292.0" y="149.7" width="1.5" height="7.8"/><rect x="293.5" y="149.7" width="1.5" height="8.8"/><rect x="295.0" y="151.2" width="1.5" height="6.8"/><rect x="296.5" y="151.2" width="1.5" height="7.3"/><rect x="301.0" y="150.2" width="1.5" height="8.3"/><rect x="302.5" y="149.2" width="1.5" height="8.3"/><rect x="304.0" y="149.7" width="1.5" height="7.8"/><rect x="305.5" y="150.7" width="1.5" height="7.8"/><rect x="307.0" y="149.7" width="1.5" height="8.8"/><rect x="308.5" y="150.2" width="1.5" height="7.3"/><rect x="310.0" y="149.7" width="1.5" height="7.8"/><rect x="313.0" y="150.7" width="1.5" height="6.8"/><rect x="314.5" y="151.2" width="1.5" height="7.3"/><rect x="316.0" y="150.2" width="1.5" height="8.3"/><rect x="319.0" y="150.2" width="1.5" height="7.3"/><rect x="320.5" y="149.7" width="1.5" height="8.8"/><rect x="322.0" y="149.7" width="1.5" height="8.8"/><rect x="325.0" y="150.2" width="1.5" height="8.3"/><rect x="326.5" y="149.7" width="1.5" height="8.3"/><rect x="328.0" y="149.7" width="1.5" height="7.8"/><rect x="329.5" y="149.2" width="1.5" height="9.3"/><rect x="331.0" y="150.7" width="1.5" height="7.8"/><rect x="332.5" y="151.2" width="1.5" height="6.8"/><rect x="334.0" y="151.2" width="1.5" height="6.8"/><rect x="335.5" y="151.2" width="1.5" height="6.8"/><rect x="337.0" y="150.2" width="1.5" height="7.3"/><rect x="340.0" y="150.2" width="1.5" height="7.3"/><rect x="344.5" y="149.2" width="1.5" height="8.3"/><rect x="347.5" y="151.2" width="1.5" height="6.8"/><rect x="350.5" y="150.2" width="1.5" height="7.8"/><rect x="353.5" y="151.2" width="1.5" height="6.8"/><rect x="355.0" y="149.7" width="1.5" height="8.3"/><rect x="356.5" y="150.7" width="1.5" height="7.3"/><rect x="359.5" y="150.7" width="1.5" height="6.8"/><rect x="361.0" y="149.2" width="1.5" height="8.3"/><rect x="364.0" y="149.7" width="1.5" height="8.3"/><rect x="365.5" y="150.2" width="1.5" height="7.3"/><rect x="367.0" y="150.2" width="1.5" height="7.3"/><rect x="368.5" y="149.7" width="1.5" height="8.8"/><rect x="370.0" y="150.7" width="1.5" height="7.8"/><rect x="376.0" y="150.7" width="1.5" height="6.8"/><rect x="379.0" y="151.2" width="1.5" height="6.8"/><rect x="380.5" y="149.2" width="1.5" height="8.3"/><rect x="382.0" y="150.2" width="1.5" height="7.3"/><rect x="383.5" y="149.7" width="1.5" height="8.8"/><rect x="385.0" y="149.7" width="1.5" height="8.3"/><rect x="386.5" y="149.2" width="1.5" height="8.3"/><rect x="391.0" y="150.2" width="1.5" height="7.3"/><rect x="392.5" y="150.7" width="1.5" height="6.8"/><rect x="394.0" y="149.2" width="1.5" height="8.3"/><rect x="395.5" y="150.7" width="1.5" height="6.8"/><rect x="397.0" y="149.7" width="1.5" height="7.8"/><rect x="400.0" y="151.2" width="1.5" height="6.8"/><rect x="403.0" y="149.7" width="1.5" height="8.3"/><rect x="404.5" y="150.7" width="1.5" height="7.8"/><rect x="407.5" y="149.7" width="1.5" height="7.8"/><rect x="410.5" y="150.7" width="1.5" height="6.8"/><rect x="413.5" y="150.7" width="1.5" height="6.8"/><rect x="415.0" y="149.7" width="1.5" height="7.8"/><rect x="416.5" y="150.7" width="1.5" height="7.3"/><rect x="418.0" y="149.7" width="1.5" height="7.8"/><rect x="419.5" y="150.7" width="1.5" height="6.8"/><rect x="424.0" y="151.2" width="1.5" height="7.3"/><rect x="425.5" y="149.7" width="1.5" height="7.8"/><rect x="427.0" y="149.7" width="1.5" height="8.3"/><rect x="428.5" y="151.2" width="1.5" height="6.8"/><rect x="430.0" y="151.2" width="1.5" height="6.8"/><rect x="431.5" y="149.2" width="1.5" height="8.8"/><rect x="433.0" y="149.7" width="1.5" height="8.3"/><rect x="434.5" y="149.7" width="1.5" height="7.8"/><rect x="436.0" y="149.2" width="1.5" height="8.3"/><rect x="440.5" y="150.2" width="1.5" height="7.3"/><rect x="445.0" y="149.2" width="1.5" height="8.3"/><rect x="446.5" y="150.2" width="1.5" height="7.3"/><rect x="449.5" y="149.2" width="1.5" height="8.8"/><rect x="451.0" y="149.7" width="1.5" height="7.8"/><rect x="452.5" y="149.7" width="1.5" height="7.8"/><rect x="454.0" y="149.2" width="1.5" height="8.3"/><rect x="455.5" y="151.2" width="1.5" height="6.8"/><rect x="458.5" y="150.7" width="1.5" height="7.3"/><rect x="461.5" y="150.7" width="1.5" height="6.8"/><rect x="463.0" y="149.7" width="1.5" height="7.8"/><rect x="466.0" y="150.7" width="1.5" height="6.8"/><rect x="467.5" y="150.7" width="1.5" height="6.8"/><rect x="470.5" y="150.2" width="1.5" height="7.3"/><rect x="472.0" y="150.2" width="1.5" height="7.3"/><rect x="473.5" y="149.7" width="1.5" height="7.8"/><rect x="475.0" y="151.2" width="1.5" height="7.3"/><rect x="478.0" y="150.7" width="1.5" height="6.8"/><rect x="479.5" y="151.2" width="1.5" height="6.8"/><rect x="481.0" y="149.7" width="1.5" height="7.8"/><rect x="482.5" y="150.2" width="1.5" height="7.3"/><rect x="484.0" y="150.7" width="1.5" height="6.8"/><rect x="485.5" y="149.2" width="1.5" height="8.3"/><rect x="487.0" y="151.2" width="1.5" height="7.3"/><rect x="488.5" y="149.7" width="1.5" height="7.8"/><rect x="490.0" y="149.2" width="1.5" height="9.3"/><rect x="491.5" y="150.2" width="1.5" height="7.3"/><rect x="493.0" y="149.2" width="1.5" height="8.8"/><rect x="496.0" y="149.2" width="1.5" height="9.3"/><rect x="497.5" y="149.2" width="1.5" height="8.3"/><rect x="499.0" y="151.2" width="1.5" height="7.3"/><rect x="500.5" y="149.2" width="1.5" height="8.8"/><rect x="502.0" y="149.2" width="1.5" height="9.3"/><rect x="503.5" y="151.2" width="1.5" height="7.3"/><rect x="505.0" y="149.7" width="1.5" height="8.8"/><rect x="506.5" y="151.2" width="1.5" height="7.3"/><rect x="508.0" y="149.2" width="1.5" height="8.3"/><rect x="512.5" y="149.2" width="1.5" height="8.3"/><rect x="514.0" y="151.2" width="1.5" height="6.8"/><rect x="515.5" y="150.2" width="1.5" height="8.3"/><rect x="518.5" y="149.2" width="1.5" height="9.3"/><rect x="520.0" y="149.2" width="1.5" height="8.3"/><rect x="521.5" y="150.2" width="1.5" height="7.3"/><rect x="523.0" y="151.2" width="1.5" height="6.8"/><rect x="524.5" y="151.2" width="1.5" height="7.3"/><rect x="526.0" y="149.7" width="1.5" height="7.8"/><rect x="527.5" y="149.2" width="1.5" height="9.3"/><rect x="529.0" y="151.2" width="1.5" height="6.8"/><rect x="530.5" y="150.7" width="1.5" height="6.8"/><rect x="532.0" y="150.7" width="1.5" height="6.8"/><rect x="533.5" y="149.2" width="1.5" height="8.3"/><rect x="535.0" y="151.2" width="1.5" height="6.8"/><rect x="536.5" y="150.2" width="1.5" height="7.8"/><rect x="538.0" y="151.2" width="1.5" height="6.8"/><rect x="539.5" y="149.2" width="1.5" height="8.3"/><rect x="541.0" y="151.2" width="1.5" height="7.3"/><rect x="542.5" y="149.2" width="1.5" height="8.3"/><rect x="544.0" y="151.2" width="1.5" height="7.3"/><rect x="547.0" y="150.7" width="1.5" height="6.8"/><rect x="548.5" y="149.7" width="1.5" height="8.8"/><rect x="551.5" y="150.2" width="1.5" height="7.3"/><rect x="553.0" y="150.2" width="1.5" height="7.3"/><rect x="554.5" y="149.2" width="1.5" height="8.3"/><rect x="556.0" y="149.2" width="1.5" height="8.3"/><rect x="557.5" y="149.2" width="1.5" height="8.8"/><rect x="559.0" y="150.7" width="1.5" height="7.8"/><rect x="560.5" y="150.7" width="1.5" height="7.3"/><rect x="562.0" y="150.2" width="1.5" height="7.8"/><rect x="563.5" y="151.2" width="1.5" height="7.3"/><rect x="566.5" y="151.2" width="1.5" height="6.8"/><rect x="569.5" y="150.2" width="1.5" height="7.3"/><rect x="571.0" y="149.7" width="1.5" height="8.3"/><rect x="572.5" y="150.7" width="1.5" height="7.3"/><rect x="575.5" y="151.2" width="1.5" height="7.3"/><rect x="578.5" y="149.2" width="1.5" height="9.3"/><rect x="580.0" y="150.7" width="1.5" height="6.8"/><rect x="581.5" y="151.2" width="1.5" height="7.3"/><rect x="583.0" y="149.2" width="1.5" height="9.3"/><rect x="584.5" y="150.7" width="1.5" height="6.8"/><rect x="586.0" y="149.2" width="1.5" height="8.3"/><rect x="587.5" y="151.2" width="1.5" height="6.8"/><rect x="589.0" y="150.2" width="1.5" height="7.8"/><rect x="592.0" y="151.2" width="1.5" height="6.8"/><rect x="593.5" y="149.2" width="1.5" height="8.8"/><rect x="595.0" y="150.2" width="1.5" height="7.3"/><rect x="596.5" y="149.2" width="1.5" height="8.3"/><rect x="598.0" y="150.2" width="1.5" height="7.3"/><rect x="599.5" y="150.2" width="1.5" height="7.3"/><rect x="604.0" y="150.7" width="1.5" height="7.3"/><rect x="607.0" y="149.2" width="1.5" height="8.3"/><rect x="608.5" y="149.2" width="1.5" height="8.3"/><rect x="610.0" y="150.7" width="1.5" height="6.8"/><rect x="611.5" y="151.2" width="1.5" height="6.8"/><rect x="613.0" y="150.2" width="1.5" height="8.3"/><rect x="616.0" y="150.2" width="1.5" height="7.3"/><rect x="620.5" y="149.2" width="1.5" height="8.3"/><rect x="622.0" y="149.2" width="1.5" height="8.3"/><rect x="625.0" y="150.2" width="1.5" height="8.3"/><rect x="626.5" y="150.7" width="1.5" height="6.8"/><rect x="628.0" y="150.7" width="1.5" height="7.3"/><rect x="629.5" y="151.2" width="1.5" height="6.8"/><rect x="631.0" y="149.7" width="1.5" height="8.8"/><rect x="634.0" y="151.2" width="1.5" height="6.8"/><rect x="635.5" y="150.2" width="1.5" height="8.3"/><rect x="638.5" y="150.2" width="1.5" height="7.3"/><rect x="640.0" y="149.7" width="1.5" height="7.8"/><rect x="641.5" y="151.2" width="1.5" height="6.8"/><rect x="643.0" y="150.2" width="1.5" height="7.3"/><rect x="644.5" y="150.7" width="1.5" height="6.8"/><rect x="646.0" y="150.7" width="1.5" height="6.8"/><rect x="647.5" y="150.2" width="1.5" height="7.3"/><rect x="649.0" y="150.7" width="1.5" height="7.3"/><rect x="650.5" y="149.7" width="1.5" height="8.3"/><rect x="653.5" y="149.2" width="1.5" height="8.3"/><rect x="656.5" y="149.7" width="1.5" height="8.3"/><rect x="658.0" y="149.7" width="1.5" height="7.8"/><rect x="659.5" y="150.2" width="1.5" height="7.3"/><rect x="661.0" y="150.2" width="1.5" height="7.8"/><rect x="662.5" y="151.2" width="1.5" height="7.3"/><rect x="667.0" y="150.7" width="1.5" height="7.8"/><rect x="671.5" y="150.7" width="1.5" height="7.8"/><rect x="674.5" y="149.2" width="1.5" height="8.8"/><rect x="676.0" y="150.2" width="1.5" height="7.8"/><rect x="677.5" y="149.2" width="1.5" height="9.3"/><rect x="679.0" y="151.2" width="1.5" height="6.8"/><rect x="680.5" y="150.7" width="1.5" height="6.8"/><rect x="682.0" y="151.2" width="1.5" height="6.8"/><rect x="683.5" y="150.7" width="1.5" height="7.8"/><rect x="685.0" y="150.7" width="1.5" height="6.8"/><rect x="686.5" y="149.2" width="1.5" height="9.3"/><rect x="688.0" y="149.7" width="1.5" height="7.8"/><rect x="691.0" y="151.2" width="1.5" height="6.8"/><rect x="692.5" y="150.2" width="1.5" height="7.8"/><rect x="694.0" y="150.2" width="1.5" height="7.3"/><rect x="697.0" y="151.2" width="1.5" height="6.8"/><rect x="698.5" y="149.2" width="1.5" height="8.8"/><rect x="700.0" y="149.7" width="1.5" height="8.3"/><rect x="703.0" y="150.2" width="1.5" height="8.3"/><rect x="704.5" y="150.2" width="1.5" height="7.8"/><rect x="709.0" y="151.2" width="1.5" height="7.3"/><rect x="710.5" y="149.2" width="1.5" height="8.3"/><rect x="712.0" y="149.2" width="1.5" height="8.8"/><rect x="713.5" y="151.2" width="1.5" height="7.3"/><rect x="718.0" y="149.7" width="1.5" height="7.8"/><rect x="719.5" y="149.2" width="1.5" height="8.3"/><rect x="722.5" y="149.7" width="1.5" height="8.3"/><rect x="724.0" y="149.2" width="1.5" height="8.3"/><rect x="727.0" y="150.7" width="1.5" height="7.8"/><rect x="728.5" y="149.7" width="1.5" height="7.8"/><rect x="730.0" y="150.2" width="1.5" height="7.3"/><rect x="731.5" y="151.2" width="1.5" height="7.3"/><rect x="734.5" y="149.7" width="1.5" height="7.8"/><rect x="736.0" y="150.2" width="1.5" height="7.3"/><rect x="737.5" y="150.7" width="1.5" height="6.8"/><rect x="739.0" y="150.2" width="1.5" height="8.3"/><rect x="740.5" y="151.2" width="1.5" height="7.3"/><rect x="743.5" y="150.2" width="1.5" height="7.3"/><rect x="746.5" y="151.2" width="1.5" height="6.8"/><rect x="748.0" y="149.2" width="1.5" height="8.8"/><rect x="751.0" y="151.2" width="1.5" height="6.8"/><rect x="752.5" y="150.7" width="1.5" height="6.8"/><rect x="754.0" y="150.2" width="1.5" height="7.3"/><rect x="755.5" y="149.2" width="1.5" height="8.3"/><rect x="757.0" y="149.2" width="1.5" height="8.8"/><rect x="758.5" y="150.7" width="1.5" height="7.3"/><rect x="761.5" y="150.7" width="1.5" height="7.8"/><rect x="764.5" y="150.2" width="1.5" height="7.3"/><rect x="766.0" y="150.7" width="1.5" height="6.8"/><rect x="767.5" y="151.2" width="1.5" height="6.8"/><rect x="770.5" y="150.7" width="1.5" height="6.8"/><rect x="772.0" y="149.7" width="1.5" height="8.3"/><rect x="773.5" y="149.7" width="1.5" height="7.8"/><rect x="775.0" y="151.2" width="1.5" height="6.8"/><rect x="776.5" y="150.2" width="1.5" height="7.3"/><rect x="778.0" y="149.7" width="1.5" height="7.8"/><rect x="779.5" y="150.2" width="1.5" height="7.3"/><rect x="782.5" y="149.7" width="1.5" height="7.8"/><rect x="784.0" y="150.2" width="1.5" height="7.3"/><rect x="785.5" y="149.2" width="1.5" height="8.3"/><rect x="787.0" y="151.2" width="1.5" height="6.8"/><rect x="788.5" y="150.2" width="1.5" height="7.3"/><rect x="790.0" y="149.2" width="1.5" height="8.3"/><rect x="793.0" y="150.7" width="1.5" height="6.8"/><rect x="794.5" y="151.2" width="1.5" height="7.3"/><rect x="796.0" y="149.2" width="1.5" height="8.8"/><rect x="799.0" y="149.2" width="1.5" height="8.8"/><rect x="800.5" y="150.7" width="1.5" height="6.8"/><rect x="802.0" y="150.2" width="1.5" height="7.3"/><rect x="808.0" y="150.2" width="1.5" height="7.3"/><rect x="809.5" y="149.7" width="1.5" height="7.8"/><rect x="811.0" y="150.2" width="1.5" height="7.3"/><rect x="812.5" y="150.7" width="1.5" height="7.3"/><rect x="815.5" y="149.2" width="1.5" height="8.8"/><rect x="818.5" y="149.7" width="1.5" height="8.3"/><rect x="821.5" y="150.7" width="1.5" height="7.3"/><rect x="823.0" y="151.2" width="1.5" height="6.8"/><rect x="824.5" y="151.2" width="1.5" height="6.8"/><rect x="826.0" y="151.2" width="1.5" height="6.8"/><rect x="827.5" y="151.2" width="1.5" height="6.8"/><rect x="830.5" y="150.7" width="1.5" height="6.8"/><rect x="832.0" y="149.2" width="1.5" height="8.3"/><rect x="833.5" y="149.7" width="1.5" height="7.8"/><rect x="835.0" y="150.7" width="1.5" height="6.8"/><rect x="836.5" y="150.7" width="1.5" height="7.8"/><rect x="839.5" y="149.2" width="1.5" height="8.3"/><rect x="841.0" y="150.7" width="1.5" height="6.8"/><rect x="842.5" y="151.2" width="1.5" height="7.3"/><rect x="844.0" y="149.2" width="1.5" height="8.3"/><rect x="847.0" y="151.2" width="1.5" height="6.8"/><rect x="848.5" y="149.2" width="1.5" height="8.8"/><rect x="850.0" y="150.2" width="1.5" height="7.3"/><rect x="851.5" y="150.2" width="1.5" height="7.8"/><rect x="853.0" y="151.2" width="1.5" height="6.8"/><rect x="856.0" y="149.2" width="1.5" height="8.3"/><rect x="857.5" y="149.2" width="1.5" height="8.3"/><rect x="859.0" y="149.7" width="1.5" height="7.8"/><rect x="860.5" y="150.7" width="1.5" height="6.8"/><rect x="862.0" y="150.2" width="1.5" height="7.3"/><rect x="863.5" y="149.7" width="1.5" height="7.8"/><rect x="865.0" y="149.7" width="1.5" height="7.8"/><rect x="866.5" y="150.2" width="1.5" height="7.3"/><rect x="868.0" y="151.2" width="1.5" height="6.8"/><rect x="871.0" y="150.2" width="1.5" height="8.3"/><rect x="872.5" y="149.7" width="1.5" height="7.8"/><rect x="874.0" y="151.2" width="1.5" height="6.8"/><rect x="877.0" y="150.7" width="1.5" height="7.8"/><rect x="880.0" y="151.2" width="1.5" height="6.8"/><rect x="881.5" y="150.2" width="1.5" height="7.8"/><rect x="884.5" y="151.2" width="1.5" height="6.8"/><rect x="886.0" y="150.2" width="1.5" height="8.3"/><rect x="887.5" y="149.2" width="1.5" height="8.3"/><rect x="889.0" y="149.2" width="1.5" height="9.3"/><rect x="890.5" y="149.2" width="1.5" height="8.3"/><rect x="892.0" y="150.7" width="1.5" height="6.8"/><rect x="893.5" y="150.7" width="1.5" height="7.8"/><rect x="895.0" y="150.7" width="1.5" height="6.8"/><rect x="896.5" y="150.7" width="1.5" height="6.8"/><rect x="898.0" y="151.2" width="1.5" height="6.8"/><rect x="904.0" y="149.7" width="1.5" height="7.8"/><rect x="905.5" y="150.7" width="1.5" height="6.8"/><rect x="907.0" y="150.2" width="1.5" height="7.3"/><rect x="908.5" y="151.2" width="1.5" height="7.3"/><rect x="910.0" y="149.7" width="1.5" height="7.8"/><rect x="911.5" y="149.2" width="1.5" height="8.3"/><rect x="913.0" y="149.2" width="1.5" height="8.8"/><rect x="916.0" y="151.2" width="1.5" height="6.8"/><rect x="917.5" y="151.2" width="1.5" height="6.8"/><rect x="919.0" y="150.7" width="1.5" height="6.8"/><rect x="920.5" y="150.7" width="1.5" height="6.8"/><rect x="923.5" y="151.2" width="1.5" height="7.3"/><rect x="925.0" y="149.7" width="1.5" height="7.8"/><rect x="928.0" y="149.7" width="1.5" height="7.8"/><rect x="929.5" y="150.2" width="1.5" height="8.3"/><rect x="931.0" y="150.7" width="1.5" height="6.8"/><rect x="932.5" y="151.2" width="1.5" height="7.3"/><rect x="934.0" y="149.2" width="1.5" height="9.3"/><rect x="935.5" y="150.7" width="1.5" height="6.8"/><rect x="938.5" y="150.7" width="1.5" height="6.8"/><rect x="941.5" y="150.7" width="1.5" height="6.8"/><rect x="943.0" y="149.7" width="1.5" height="7.8"/><rect x="946.0" y="150.2" width="1.5" height="7.3"/><rect x="947.5" y="151.2" width="1.5" height="7.3"/><rect x="949.0" y="150.7" width="1.5" height="6.8"/><rect x="952.0" y="150.2" width="1.5" height="8.3"/><rect x="953.5" y="150.2" width="1.5" height="7.3"/><rect x="955.0" y="150.2" width="1.5" height="7.3"/><rect x="956.5" y="150.2" width="1.5" height="8.3"/><rect x="958.0" y="151.2" width="1.5" height="7.3"/><rect x="961.0" y="150.2" width="1.5" height="7.3"/><rect x="962.5" y="150.2" width="1.5" height="7.3"/><rect x="964.0" y="149.2" width="1.5" height="8.3"/><rect x="965.5" y="150.2" width="1.5" height="7.3"/><rect x="967.0" y="150.7" width="1.5" height="7.8"/><rect x="968.5" y="150.7" width="1.5" height="7.3"/><rect x="970.0" y="150.2" width="1.5" height="7.3"/><rect x="971.5" y="150.7" width="1.5" height="6.8"/><rect x="973.0" y="150.2" width="1.5" height="7.8"/><rect x="976.0" y="150.2" width="1.5" height="7.3"/><rect x="977.5" y="150.2" width="1.5" height="7.3"/><rect x="979.0" y="151.2" width="1.5" height="6.8"/><rect x="980.5" y="149.7" width="1.5" height="7.8"/><rect x="982.0" y="150.2" width="1.5" height="7.3"/><rect x="985.0" y="151.2" width="1.5" height="7.3"/><rect x="986.5" y="151.2" width="1.5" height="6.8"/><rect x="988.0" y="151.2" width="1.5" height="7.3"/><rect x="989.5" y="149.7" width="1.5" height="7.8"/><rect x="991.0" y="149.2" width="1.5" height="9.3"/><rect x="994.0" y="150.7" width="1.5" height="6.8"/></g><rect x="28.0" y="152" width="967.5" height="4.7" fill="#f20c0c"/>
<circle cx="21.6" cy="12.2" r="7.7" fill="none" stroke="#d4bc30" stroke-width="4.8"/>
<path d="M35.65 2 V12.4 A5.525 5.525 0 0 0 46.7 12.4 V2 M46.7 12.9 A4.95 4.95 0 0 0 56.6 12.9 V2" fill="none" stroke="#050a28" stroke-width="4.7"/>
<circle cx="70.5" cy="11.8" r="7.5" fill="none" stroke="#050a28" stroke-width="4.7"/>
<path d="M85.3 23.5 V11.25 A5.95 5.95 0 0 1 97.2 11.25 V23.5" fill="none" stroke="#050a28" stroke-width="4.7"/>
<rect x="153" y="1.5" width="104" height="22.5" rx="11.25" fill="#08dc08"/>
<g transform="translate(178.2,18.9)"><text transform="scale(1,1.0)" text-anchor="middle" fill="#064006" stroke="#064006" stroke-width="0.45"><tspan x="6.4">A</tspan><tspan x="19.2">u</tspan><tspan x="32.0">t</tspan><tspan x="44.8">o</tspan></text></g>
<rect x="320" y="1.3" width="380" height="22.7" rx="11.35" fill="#000"/>
<rect x="332.5" y="11" width="359" height="1.6" fill="#b0b080"/>
<path d="M378.5 23 V3.5 H381.5" fill="none" stroke="#c8c8c8" stroke-width="1.8"/>
<path d="M646 23 V3.5 H643" fill="none" stroke="#c8c8c8" stroke-width="1.8"/>
<path d="M509.5 3.2 H515 M512.2 3.2 V8" stroke="#a838b0" stroke-width="1.8"/>
<rect x="717" y="1.3" width="138" height="22.7" rx="11.35" fill="#000"/>
<path d="M722.5 4.5 H737.5 V15.0 Q737.5 19.5 731.8 21.5 Q730.0 21.9 728.2 21.5 Q722.5 19.5 722.5 15.0 Z" fill="#34005a" stroke="#9050c0" stroke-width="1.5"/>
<path d="M723.5 9.5 H736.5 M730 9.5 V17.5" stroke="#9050c0" stroke-width="1.8"/>
<g transform="translate(739.9,20.1)"><text transform="scale(1,1.0)" text-anchor="middle" fill="#e0e0e0"><tspan x="19.2">.</tspan><tspan x="70.4">n</tspan><tspan x="83.2">s</tspan></text><g fill="none" stroke="#e0e0e0" stroke-width="1.5"><rect x="3.20" y="-11.65" width="6.4" height="10.9" rx="2.9"/><rect x="28.80" y="-11.65" width="6.4" height="10.9" rx="2.9"/><rect x="41.60" y="-11.65" width="6.4" height="10.9" rx="2.9"/><rect x="54.40" y="-11.65" width="6.4" height="10.9" rx="2.9"/></g></g>
<path d="M970.5 13 L980 9.5 L983.5 16.5 L974 20 Z" fill="#a8b0dc" stroke="#1c3c90" stroke-width="1.2"/>
<path d="M974 14.5 L979 12.8 L980.5 15.5 L975.5 17.2 Z" fill="#9088b0"/>
<path d="M967 4.5 L974.5 2.5 L976.2 10 L972.8 13 L969.8 11.5 Z" fill="#38c048"/>
<path d="M972.3 6.5 L973.5 12" stroke="#0a6a20" stroke-width="1.5"/>
<path d="M505.5 25.5 H521.5 V36.7 Q521.5 41.3 515.4 43.5 Q513.5 43.9 511.6 43.5 Q505.5 41.3 505.5 36.7 Z" fill="#300050" stroke="#9050c0" stroke-width="1.5"/>
<path d="M508 31.3 H519 M513.5 31.3 V39.5" stroke="#9050c0" stroke-width="1.8"/>
<path d="M999.6 94.2 L1010.5 86.8 H1015.6 V101.6 H1010.5 Z" fill="#a820e0"/>
<path d="M0.8 334.5 H18 L24.5 345 L18 355.5 H0.8 Z" fill="#200008" stroke="#c01030" stroke-width="1.6"/>
<path d="M7.5 339.5 L10.5 338 V351" fill="none" stroke="#e01828" stroke-width="2.2"/>
<rect x="0" y="664" width="1024" height="104" fill="#0080e0"/>
<rect x="0" y="664" width="2.5" height="104" fill="#6cb0cc"/>
<rect x="2" y="664.8" width="264" height="24.5" rx="5" fill="#000"/>
<rect x="2" y="689.3" width="264" height="2.5" fill="#203a58"/>
<rect x="2" y="691.8" width="264" height="23.2" rx="5" fill="#000"/>
<rect x="2" y="715" width="404" height="2.8" fill="#90b0c8"/>
<rect x="2" y="717.8" width="403.5" height="22.2" rx="5" fill="#000"/>
<rect x="266" y="664" width="4" height="51" fill="#70b0e0"/>
<rect x="270" y="664.7" width="135.5" height="50.3" rx="6" fill="#000"/>
<rect x="0" y="763.5" width="405" height="4.5" fill="#60a8c8"/>
<rect x="405" y="664" width="3" height="104" fill="#70b8d8"/>
<circle cx="13" cy="678.3" r="10" fill="#f01010"/>
<path d="M10 674 L12.8 671.5 V685" fill="none" stroke="#a00818" stroke-width="2"/>
<g transform="translate(21.8,686)"><text transform="scale(1,1.0)" text-anchor="middle" fill="#a01830"><tspan x="6.4">1</tspan><tspan x="32.0">V</tspan><tspan x="44.8">~</tspan></text><g fill="none" stroke="#a01830" stroke-width="1.5"><rect x="16.00" y="-11.65" width="6.4" height="10.9" rx="2.9"/></g></g>
<g transform="translate(134.1,686)"><text transform="scale(1,1.0)" text-anchor="middle" fill="#a81830"><tspan x="19.2">.</tspan><tspan x="57.6">d</tspan><tspan x="70.4">i</tspan><tspan x="83.2">v</tspan></text><g fill="none" stroke="#a81830" stroke-width="1.5"><rect x="3.20" y="-11.65" width="6.4" height="10.9" rx="2.9"/><rect x="28.80" y="-11.65" width="6.4" height="10.9" rx="2.9"/><rect x="41.60" y="-11.65" width="6.4" height="10.9" rx="2.9"/></g></g>
<circle cx="13.2" cy="703.8" r="10" fill="#e8e830"/>
<g transform="translate(13.2,710.5)"><text transform="scale(1,1)" text-anchor="middle" fill="#101010" style="font-size:19px;font-weight:bold"><tspan x="0.0">2</tspan></text></g>
<g transform="translate(21.5,710)"><text transform="scale(1,1.0)" text-anchor="middle" fill="#e0e098"><tspan x="6.4">5</tspan><tspan x="32.0">.</tspan><tspan x="57.6">m</tspan><tspan x="70.4">V</tspan><tspan x="83.2">~</tspan></text><g fill="none" stroke="#e0e098" stroke-width="1.5"><rect x="16.00" y="-11.65" width="6.4" height="10.9" rx="2.9"/><rect x="41.60" y="-11.65" width="6.4" height="10.9" rx="2.9"/></g></g>
<g transform="translate(134,710)"><text transform="scale(1,1.0)" text-anchor="middle" fill="#e0e098"><tspan x="19.2">.</tspan><tspan x="57.6">d</tspan><tspan x="70.4">i</tspan><tspan x="83.2">v</tspan></text><g fill="none" stroke="#e0e098" stroke-width="1.5"><rect x="3.20" y="-11.65" width="6.4" height="10.9" rx="2.9"/><rect x="28.80" y="-11.65" width="6.4" height="10.9" rx="2.9"/><rect x="41.60" y="-11.65" width="6.4" height="10.9" rx="2.9"/></g></g>
<circle cx="12.5" cy="728.5" r="10" fill="#e8e830"/>
<g transform="translate(12.5,735.2)"><text transform="scale(1,1)" text-anchor="middle" fill="#101010" style="font-size:19px;font-weight:bold"><tspan x="0.0">2</tspan></text></g>
<g transform="translate(26.2,736)"><text transform="scale(1,1.0)" text-anchor="middle" fill="#e0e080"><tspan x="6.4">F</tspan><tspan x="19.2">:</tspan><tspan x="32.0">O</tspan><tspan x="44.8">F</tspan><tspan x="57.6">F</tspan></text></g>
<g transform="translate(285.4,683.3)"><text transform="scale(1,1.0)" text-anchor="middle" fill="#e8e8e8"><tspan x="6.4">(</tspan><tspan x="19.2">2</tspan><tspan x="32.0">5</tspan><tspan x="44.8">K</tspan><tspan x="57.6">S</tspan><tspan x="70.4">/</tspan><tspan x="83.2">s</tspan><tspan x="96.0">)</tspan></text></g>
<g transform="translate(278.1,709)"><text transform="scale(1,1.0)" text-anchor="middle" fill="#e8e8e8"><tspan x="6.4">D</tspan><tspan x="19.2">e</tspan><tspan x="32.0">p</tspan><tspan x="44.8">t</tspan><tspan x="57.6">h</tspan><tspan x="70.4">:</tspan><tspan x="83.2">1</tspan><tspan x="108.8">K</tspan></text><g fill="none" stroke="#e8e8e8" stroke-width="1.5"><rect x="92.80" y="-11.65" width="6.4" height="10.9" rx="2.9"/></g></g>
<rect x="408" y="689.5" width="616" height="78.5" fill="#0062a6"/>
<rect x="409.5" y="665.5" width="126" height="22.5" rx="11.25" fill="#000"/>
<g transform="translate(432.2,683.3)"><text transform="scale(1,1.0)" text-anchor="middle" fill="#e8e8e8"><tspan x="6.4">M</tspan><tspan x="19.2">:</tspan><tspan x="32.0">2</tspan><tspan x="57.6">m</tspan><tspan x="70.4">s</tspan></text><g fill="none" stroke="#e8e8e8" stroke-width="1.5"><rect x="41.60" y="-11.65" width="6.4" height="10.9" rx="2.9"/></g></g>
<rect x="410.5" y="690.5" width="116.5" height="74.5" rx="4" fill="#0052a0"/><rect x="412.5" y="692" width="111.5" height="69" rx="3" fill="#42a6f6"/><rect x="414.5" y="694" width="109.5" height="67" rx="2" fill="#0080e2"/>
<g transform="translate(442,718.8)"><text transform="scale(1,1.0)" text-anchor="middle" fill="#082e80" style="font-weight:bold"><tspan x="6.4">T</tspan><tspan x="19.2">y</tspan><tspan x="32.0">p</tspan><tspan x="44.8">e</tspan></text></g>
<rect x="436" y="730.5" width="64.5" height="25" fill="#f0e8e0"/>
<rect x="436" y="730.5" width="64.5" height="3" fill="#dcecf8"/>
<g transform="translate(435.4,749.2)"><text transform="scale(1,1.0)" text-anchor="middle" fill="#141010" style="font-weight:bold" stroke="#f0ece4" stroke-width="0.4"><tspan x="6.4">I</tspan><tspan x="19.2">m</tspan><tspan x="32.0">a</tspan><tspan x="44.8">g</tspan><tspan x="57.6">e</tspan></text></g>
<rect x="763" y="690.5" width="116.5" height="74.5" rx="4" fill="#0052a0"/><rect x="765" y="692" width="111.5" height="69" rx="3" fill="#42a6f6"/><rect x="767" y="694" width="109.5" height="67" rx="2" fill="#0080e2"/>
<text transform="translate(795.5,734.8) scale(1,1.1)" fill="#0a3a98" style="font-size:18px;font-weight:bold;font-family:'Liberation Sans',sans-serif;letter-spacing:2.4px">Save</text>
<rect x="852" y="665.5" width="163.5" height="22.5" rx="11.25" fill="#000"/>
<circle cx="864.7" cy="676.7" r="10.2" fill="#f01010"/>
<path d="M862.5 672.5 L865 670.5 V683" fill="none" stroke="#8a0818" stroke-width="1.9"/>
<path d="M877 685 H888 L893.5 669 H902" fill="none" stroke="#e0e0e0" stroke-width="1.8"/>
<g transform="translate(903.5,685)"><text transform="scale(1,1.0)" text-anchor="middle" fill="#e0e0e0"><tspan x="6.4">3</tspan><tspan x="19.2">9</tspan><tspan x="32.0">.</tspan><tspan x="44.8">2</tspan><tspan x="57.6">V</tspan></text></g>
<rect x="1022" y="664" width="2" height="104" fill="#1a80d8"/>
<rect x="408" y="764" width="616" height="4" fill="#0a70c8"/>
</svg>
</body></html>
